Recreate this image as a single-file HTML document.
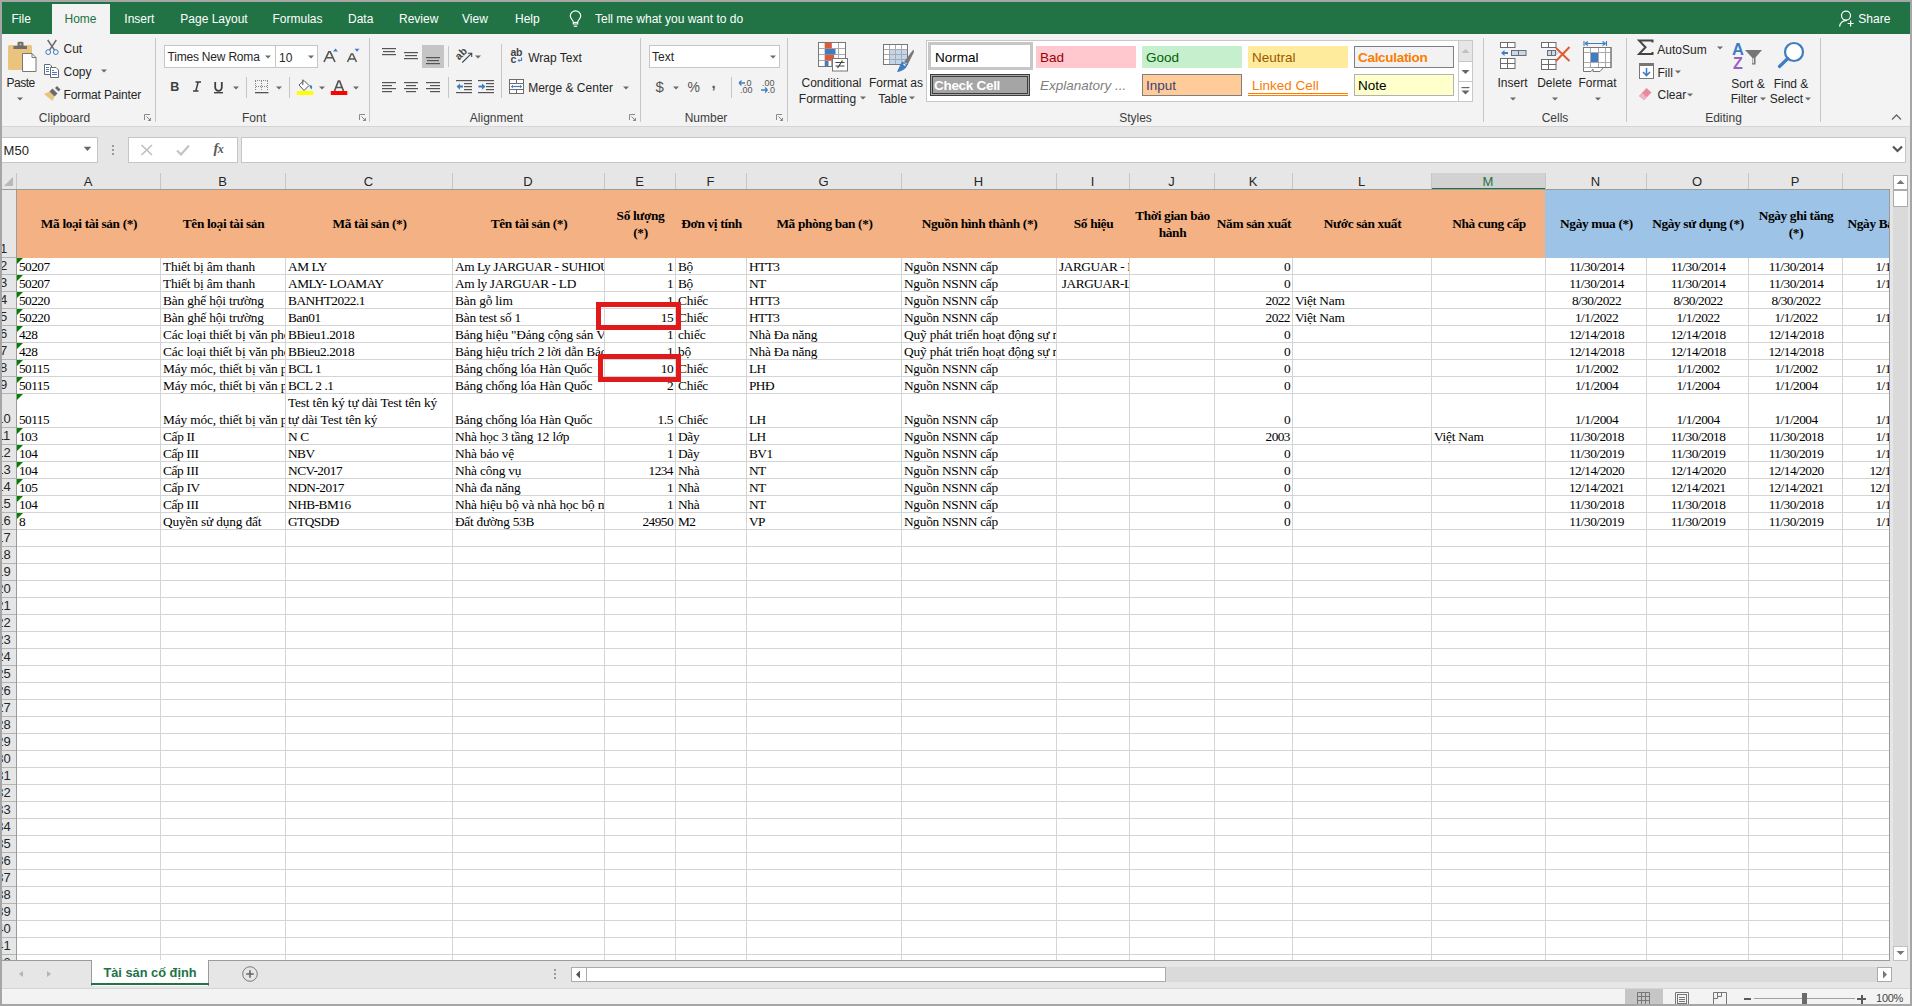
<!DOCTYPE html><html><head><meta charset="utf-8"><style>html,body{margin:0;padding:0;}body{width:1912px;height:1006px;position:relative;overflow:hidden;background:#a6a6a6;font-family:"Liberation Sans",sans-serif;}body div, body svg{position:absolute;box-sizing:border-box;}.c{overflow:hidden;}</style></head><body><div style="left:2px;top:2px;width:1908px;height:32px;background:#217346;"></div><div style="left:52px;top:4px;width:58px;height:30px;background:#f3f3f3;"></div><div style="top:12.84px;font:normal 12px/12px 'Liberation Sans', sans-serif;color:#ffffff;white-space:nowrap;left:11.5px;">File</div><div style="top:12.84px;font:normal 12px/12px 'Liberation Sans', sans-serif;color:#ffffff;white-space:nowrap;left:124.3px;">Insert</div><div style="top:12.84px;font:normal 12px/12px 'Liberation Sans', sans-serif;color:#ffffff;white-space:nowrap;left:180.3px;">Page Layout</div><div style="top:12.84px;font:normal 12px/12px 'Liberation Sans', sans-serif;color:#ffffff;white-space:nowrap;left:272.5px;">Formulas</div><div style="top:12.84px;font:normal 12px/12px 'Liberation Sans', sans-serif;color:#ffffff;white-space:nowrap;left:348px;">Data</div><div style="top:12.84px;font:normal 12px/12px 'Liberation Sans', sans-serif;color:#ffffff;white-space:nowrap;left:399px;">Review</div><div style="top:12.84px;font:normal 12px/12px 'Liberation Sans', sans-serif;color:#ffffff;white-space:nowrap;left:462px;">View</div><div style="top:12.84px;font:normal 12px/12px 'Liberation Sans', sans-serif;color:#ffffff;white-space:nowrap;left:515px;">Help</div><div style="top:12.84px;font:normal 12px/12px 'Liberation Sans', sans-serif;color:#ffffff;white-space:nowrap;left:595px;">Tell me what you want to do</div><div style="top:12.84px;font:normal 12px/12px 'Liberation Sans', sans-serif;color:#217346;white-space:nowrap;left:64.5px;">Home</div><div style="top:12.84px;font:normal 12px/12px 'Liberation Sans', sans-serif;color:#ffffff;white-space:nowrap;left:1858.3px;">Share</div><div style="left:2px;top:34px;width:1908px;height:92px;background:#f3f3f3;"></div><div style="left:2px;top:126px;width:1908px;height:1px;background:#d5d5d5;"></div><div style="left:155px;top:38px;width:1px;height:84px;background:#c6c6c6;"></div><div style="left:369px;top:38px;width:1px;height:84px;background:#c6c6c6;"></div><div style="left:640px;top:38px;width:1px;height:84px;background:#c6c6c6;"></div><div style="left:787px;top:38px;width:1px;height:84px;background:#c6c6c6;"></div><div style="left:1483px;top:38px;width:1px;height:84px;background:#c6c6c6;"></div><div style="left:1626px;top:38px;width:1px;height:84px;background:#c6c6c6;"></div><div style="left:1820px;top:38px;width:1px;height:84px;background:#c6c6c6;"></div><div style="top:112.14px;font:normal 12px/12px 'Liberation Sans', sans-serif;color:#3c3c3c;white-space:nowrap;left:-435.5px;width:1000px;text-align:center;">Clipboard</div><div style="top:112.14px;font:normal 12px/12px 'Liberation Sans', sans-serif;color:#3c3c3c;white-space:nowrap;left:-246px;width:1000px;text-align:center;">Font</div><div style="top:112.14px;font:normal 12px/12px 'Liberation Sans', sans-serif;color:#3c3c3c;white-space:nowrap;left:-3.5px;width:1000px;text-align:center;">Alignment</div><div style="top:112.14px;font:normal 12px/12px 'Liberation Sans', sans-serif;color:#3c3c3c;white-space:nowrap;left:206px;width:1000px;text-align:center;">Number</div><div style="top:112.14px;font:normal 12px/12px 'Liberation Sans', sans-serif;color:#3c3c3c;white-space:nowrap;left:635.5px;width:1000px;text-align:center;">Styles</div><div style="top:112.14px;font:normal 12px/12px 'Liberation Sans', sans-serif;color:#3c3c3c;white-space:nowrap;left:1055px;width:1000px;text-align:center;">Cells</div><div style="top:112.14px;font:normal 12px/12px 'Liberation Sans', sans-serif;color:#3c3c3c;white-space:nowrap;left:1223.5px;width:1000px;text-align:center;">Editing</div><svg style="left:568px;top:9px;" width="16" height="19" viewBox="0 0 16 19"><g fill="none" stroke="#fff" stroke-width="1.2"><path d="M5.3 15 L5.3 13 C5 11 2.3 9.5 2.3 7 A5.2 5.2 0 1 1 12.7 7 C12.7 9.5 10 11 9.7 13 L9.7 15 Z"/><path d="M5.3 13.5 H9.7"/><path d="M5.8 17.2 H9.2"/></g></svg><svg style="left:1837px;top:9px;" width="18" height="18" viewBox="0 0 18 18"><g fill="none" stroke="#fff" stroke-width="1.2"><circle cx="9" cy="6.6" r="4.5"/><path d="M2.6 17.6 C3 13.5 6 11.5 10 11.3"/><path d="M13.6 11.5 V17.5 M10.6 14.5 H16.6"/></g></svg><svg style="left:6px;top:40px;" width="32" height="34" viewBox="0 0 32 34"><rect x="2" y="5" width="24" height="25" rx="1.5" fill="#eac47e"/><path d="M7.5 9 V6 H11.5 V3 A1.5 1.5 0 0 1 13 1.8 H16 A1.5 1.5 0 0 1 17.5 3 V6 H21 V9 Z" fill="#6d6d6d"/><rect x="13.6" y="3.6" width="1.8" height="1.6" fill="#eac47e"/><path d="M16.5 13.5 H26 L30 17.5 V31.5 H16.5 Z" fill="#fff" stroke="#777" stroke-width="1"/><path d="M26 13.5 V17.5 H30" fill="none" stroke="#777" stroke-width="1"/></svg><div style="top:77.34px;font:normal 12px/12px 'Liberation Sans', sans-serif;color:#262626;white-space:nowrap;letter-spacing:-0.500px;left:6.5px;">Paste</div><svg style="left:15.5px;top:95.5px;" width="8" height="6" viewBox="0 0 8 6"><path d="M1.0 1.5 L7.0 1.5 L4 4.5 Z" fill="#6a6a6a"/></svg><svg style="left:44px;top:39px;" width="17" height="17" viewBox="0 0 17 17"><g stroke="#6d6d6d" stroke-width="1.5" fill="none"><path d="M3.7 1 L10.5 11.2"/><path d="M12.3 1 L5.5 11.2"/></g><g stroke="#3d7cc9" stroke-width="1" fill="none"><circle cx="4.2" cy="13.1" r="2.4"/><circle cx="11.8" cy="13.1" r="2.4"/></g></svg><div style="top:43.44px;font:normal 12px/12px 'Liberation Sans', sans-serif;color:#262626;white-space:nowrap;left:63.5px;">Cut</div><svg style="left:43px;top:63px;" width="18" height="16" viewBox="0 0 18 16"><g fill="#fff" stroke="#6a6a6a" stroke-width="1"><path d="M1.5 1.5 H7 L8.5 3 V11.5 H1.5 Z"/><path d="M7.5 4.5 H13 L15.5 7 V14.5 H7.5 Z"/></g><g fill="#3d7cc9"><rect x="3" y="4" width="3" height="1"/><rect x="3" y="6" width="3" height="1"/><rect x="3" y="8" width="3" height="1"/><rect x="9" y="7" width="2" height="1"/><rect x="9" y="9" width="5" height="1"/><rect x="9" y="11" width="5" height="1"/></g></svg><div style="top:66.34px;font:normal 12px/12px 'Liberation Sans', sans-serif;color:#262626;white-space:nowrap;left:63.5px;">Copy</div><svg style="left:99.5px;top:68px;" width="8" height="6" viewBox="0 0 8 6"><path d="M1.0 1.5 L7.0 1.5 L4 4.5 Z" fill="#6a6a6a"/></svg><svg style="left:43px;top:86px;" width="19" height="16" viewBox="0 0 19 16"><path d="M1 8 L6.5 5.5 L11.5 10.5 L9.5 15 Z" fill="#eac47e"/><path d="M6.5 5.5 L9.5 2.5 L14.5 7.5 L11.5 10.5 Z" fill="#6a6a6a"/><path d="M12 2 L14 0 L17.5 3.5 L15.5 5.5 Z" fill="#6a6a6a"/></svg><div style="top:89.24px;font:normal 12px/12px 'Liberation Sans', sans-serif;color:#262626;white-space:nowrap;letter-spacing:-0.120px;left:63.5px;">Format Painter</div><svg style="left:144px;top:114px;" width="8" height="8" viewBox="0 0 8 8"><path d="M0.5 6 V0.5 H6" stroke="#8a8a8a" fill="none"/><path d="M2.5 2.5 L6.5 6.5" stroke="#8a8a8a" fill="none"/><path d="M3.5 7 H7 V3.5 Z" fill="#8a8a8a"/></svg><div style="left:164px;top:45px;width:112px;height:23px;background:#fff;border:1px solid #c6c6c6;"></div><div style="left:275px;top:45px;width:43px;height:23px;background:#fff;border:1px solid #c6c6c6;"></div><div style="top:51.34px;font:normal 12px/12px 'Liberation Sans', sans-serif;color:#262626;white-space:nowrap;letter-spacing:-0.200px;left:167.5px;">Times New Roma</div><svg style="left:263.5px;top:54px;" width="8" height="6" viewBox="0 0 8 6"><path d="M1.0 1.5 L7.0 1.5 L4 4.5 Z" fill="#6a6a6a"/></svg><div style="top:51.84px;font:normal 12px/12px 'Liberation Sans', sans-serif;color:#262626;white-space:nowrap;left:279px;">10</div><svg style="left:306.5px;top:54px;" width="8" height="6" viewBox="0 0 8 6"><path d="M1.0 1.5 L7.0 1.5 L4 4.5 Z" fill="#6a6a6a"/></svg><svg style="left:322px;top:46px;" width="17" height="17" viewBox="0 0 17 17"><path d="M2 16 L6.8 5.8 H8.2 L13 16 M4 11.8 H11" fill="none" stroke="#555" stroke-width="1.6"/><path d="M11 5.5 L13.5 2.5 L16 5.5 Z" fill="#3f7dc3"/></svg><svg style="left:345px;top:46px;" width="16" height="17" viewBox="0 0 16 17"><path d="M2.5 16 L6.3 8 H7.7 L11.5 16 M4.2 13 H10" fill="none" stroke="#555" stroke-width="1.5"/><path d="M9.5 2.8 H14.5 L12 5.8 Z" fill="#3f7dc3"/></svg><div style="top:81.42px;font:bold 12.5px/12.5px 'Liberation Sans', sans-serif;color:#404040;white-space:nowrap;left:170.3px;">B</div><svg style="left:192px;top:81px;" width="10" height="11" viewBox="0 0 10 11"><path d="M3.5 1 H9 M1 10 H6.5 M6.2 1 L3.8 10" stroke="#404040" stroke-width="1.5" fill="none"/></svg><svg style="left:213px;top:81px;" width="11" height="13" viewBox="0 0 11 13"><path d="M2.2 1 V6.5 A3.3 3.3 0 0 0 8.8 6.5 V1" stroke="#404040" stroke-width="1.8" fill="none"/><rect x="1" y="11" width="9" height="1.4" fill="#404040"/></svg><svg style="left:231.5px;top:84.5px;" width="8" height="6" viewBox="0 0 8 6"><path d="M1.0 1.5 L7.0 1.5 L4 4.5 Z" fill="#6a6a6a"/></svg><div style="left:246px;top:77px;width:1px;height:21px;background:#c6c6c6;"></div><svg style="left:254px;top:79px;" width="16" height="15" viewBox="0 0 16 15"><g fill="#888"><path d="M1 1 h1 v1 h-1z M3 1h1v1h-1z M5 1h1v1h-1z M7 1h1v1h-1z M9 1h1v1h-1z M11 1h1v1h-1z M13 1h1v1h-1z"/></g><g stroke="#888" stroke-dasharray="1 1" fill="none"><path d="M1.5 2 V12 M7.5 2 V12 M13.5 2 V12 M2 7.5 H13"/></g><rect x="1" y="13" width="13.5" height="1.3" fill="#555"/></svg><svg style="left:274.5px;top:84.5px;" width="8" height="6" viewBox="0 0 8 6"><path d="M1.0 1.5 L7.0 1.5 L4 4.5 Z" fill="#6a6a6a"/></svg><div style="left:289px;top:77px;width:1px;height:21px;background:#c6c6c6;"></div><svg style="left:296px;top:78px;" width="19" height="18" viewBox="0 0 19 18"><path d="M3 7 L8 2.5 L13 7.5 L8 12.5 Z" fill="#fff" stroke="#555" stroke-width="1"/><path d="M6.8 1.5 V7" stroke="#555" stroke-width="1"/><path d="M13.5 7.5 C16 6.5 17 8.5 15.5 11.5 L14 9.5 Z" fill="#3f7dc3"/><rect x="0.8" y="13" width="16.5" height="4" fill="#ffff00"/></svg><svg style="left:317.5px;top:84.5px;" width="8" height="6" viewBox="0 0 8 6"><path d="M1.0 1.5 L7.0 1.5 L4 4.5 Z" fill="#6a6a6a"/></svg><svg style="left:330px;top:79px;" width="18" height="17" viewBox="0 0 18 17"><path d="M4.5 12 L8.4 2 H9.6 L13.5 12 M6 8.5 H12" fill="none" stroke="#555" stroke-width="1.7"/><rect x="0.8" y="12" width="16.5" height="4" fill="#ff0000"/></svg><svg style="left:351.5px;top:84.5px;" width="8" height="6" viewBox="0 0 8 6"><path d="M1.0 1.5 L7.0 1.5 L4 4.5 Z" fill="#6a6a6a"/></svg><svg style="left:359px;top:114px;" width="8" height="8" viewBox="0 0 8 8"><path d="M0.5 6 V0.5 H6" stroke="#8a8a8a" fill="none"/><path d="M2.5 2.5 L6.5 6.5" stroke="#8a8a8a" fill="none"/><path d="M3.5 7 H7 V3.5 Z" fill="#8a8a8a"/></svg><svg style="left:382px;top:47px;" width="14" height="9" viewBox="0 0 14 9"><rect x="0" y="1" width="14" height="1.2" fill="#555"/><rect x="1" y="4" width="12" height="1.2" fill="#555"/><rect x="0" y="7" width="14" height="1.2" fill="#555"/></svg><svg style="left:404px;top:51px;" width="14" height="9" viewBox="0 0 14 9"><rect x="0" y="1" width="14" height="1.2" fill="#555"/><rect x="1" y="4" width="12" height="1.2" fill="#555"/><rect x="0" y="7" width="14" height="1.2" fill="#555"/></svg><div style="left:422px;top:45px;width:22px;height:23px;background:#c5c5c5;"></div><svg style="left:426px;top:56px;" width="14" height="9" viewBox="0 0 14 9"><rect x="0" y="1" width="14" height="1.2" fill="#555"/><rect x="1" y="4" width="12" height="1.2" fill="#555"/><rect x="0" y="7" width="14" height="1.2" fill="#555"/></svg><div style="left:448px;top:46px;width:1px;height:21px;background:#c6c6c6;"></div><svg style="left:450px;top:42px;" width="26" height="24" viewBox="0 0 26 24"><text x="0" y="0" transform="translate(9 18.5) rotate(-45)" font-family="Liberation Sans" font-size="10.5" font-weight="bold" fill="#454545">ab</text><path d="M12.3 20.5 L21.5 11.3 M17.8 11.2 H21.7 V15" stroke="#454545" stroke-width="1.1" fill="none"/></svg><svg style="left:474px;top:54px;" width="8" height="6" viewBox="0 0 8 6"><path d="M1.0 1.5 L7.0 1.5 L4 4.5 Z" fill="#6a6a6a"/></svg><svg style="left:382px;top:81px;" width="14" height="13" viewBox="0 0 14 13"><rect x="0" y="1" width="14" height="1.2" fill="#555"/><rect x="0" y="4" width="10" height="1.2" fill="#555"/><rect x="0" y="7" width="14" height="1.2" fill="#555"/><rect x="0" y="10" width="10" height="1.2" fill="#555"/></svg><svg style="left:404px;top:81px;" width="14" height="13" viewBox="0 0 14 13"><rect x="0" y="1" width="14" height="1.2" fill="#555"/><rect x="2" y="4" width="10" height="1.2" fill="#555"/><rect x="0" y="7" width="14" height="1.2" fill="#555"/><rect x="2" y="10" width="10" height="1.2" fill="#555"/></svg><svg style="left:426px;top:81px;" width="14" height="13" viewBox="0 0 14 13"><rect x="0" y="1" width="14" height="1.2" fill="#555"/><rect x="4" y="4" width="10" height="1.2" fill="#555"/><rect x="0" y="7" width="14" height="1.2" fill="#555"/><rect x="4" y="10" width="10" height="1.2" fill="#555"/></svg><div style="left:448px;top:77px;width:1px;height:21px;background:#c6c6c6;"></div><svg style="left:456px;top:79px;" width="17" height="15" viewBox="0 0 17 15"><rect x="0" y="1" width="16" height="1.2" fill="#555"/><rect x="8" y="4" width="8" height="1.2" fill="#555"/><rect x="8" y="7" width="8" height="1.2" fill="#555"/><rect x="8" y="10" width="8" height="1.2" fill="#555"/><rect x="0" y="13" width="16" height="1.2" fill="#555"/><path d="M0.5 7.6 L4 4.5 V6.6 H7 V8.6 H4 V10.7 Z" fill="#3f7dc3"/></svg><svg style="left:478px;top:79px;" width="17" height="15" viewBox="0 0 17 15"><rect x="0" y="1" width="16" height="1.2" fill="#555"/><rect x="8" y="4" width="8" height="1.2" fill="#555"/><rect x="8" y="7" width="8" height="1.2" fill="#555"/><rect x="8" y="10" width="8" height="1.2" fill="#555"/><rect x="0" y="13" width="16" height="1.2" fill="#555"/><path d="M7.5 7.6 L4 4.5 V6.6 H0.5 V8.6 H4 V10.7 Z" fill="#3f7dc3"/></svg><div style="left:501px;top:44px;width:1px;height:54px;background:#c6c6c6;"></div><svg style="left:509px;top:46px;" width="16" height="18" viewBox="0 0 16 18"><text x="1.5" y="9.8" font-family="Liberation Sans" font-size="10.5" font-weight="bold" fill="#454545" letter-spacing="-0.3">ab</text><text x="1.5" y="16.8" font-family="Liberation Sans" font-size="10.5" font-weight="bold" fill="#454545">c</text><path d="M12.5 11.5 V14.5 H9.5" stroke="#3f7dc3" stroke-width="1.2" fill="none"/><path d="M8.5 14.5 L10.5 12.8 V16.2 Z" fill="#3f7dc3"/></svg><div style="top:51.74px;font:normal 12px/12px 'Liberation Sans', sans-serif;color:#262626;white-space:nowrap;left:528.2px;">Wrap Text</div><svg style="left:508px;top:78px;" width="17" height="17" viewBox="0 0 17 17"><rect x="1.5" y="1.5" width="14" height="14" fill="#fff" stroke="#6d6d6d"/><path d="M1.5 5.5 H15.5 M1.5 11.5 H15.5 M8.5 1.5 V5.5 M8.5 11.5 V15.5" stroke="#6d6d6d" fill="none"/><path d="M3.5 8.5 H13.5" stroke="#3f7dc3" stroke-width="1.2"/><path d="M3 8.5 L5 6.8 V10.2 Z M14 8.5 L12 6.8 V10.2 Z" fill="#3f7dc3"/></svg><div style="top:82.44px;font:normal 12px/12px 'Liberation Sans', sans-serif;color:#262626;white-space:nowrap;left:528.2px;">Merge &amp; Center</div><svg style="left:621.5px;top:85px;" width="8" height="6" viewBox="0 0 8 6"><path d="M1.0 1.5 L7.0 1.5 L4 4.5 Z" fill="#6a6a6a"/></svg><svg style="left:629px;top:114px;" width="8" height="8" viewBox="0 0 8 8"><path d="M0.5 6 V0.5 H6" stroke="#8a8a8a" fill="none"/><path d="M2.5 2.5 L6.5 6.5" stroke="#8a8a8a" fill="none"/><path d="M3.5 7 H7 V3.5 Z" fill="#8a8a8a"/></svg><div style="left:649px;top:45px;width:131px;height:23px;background:#fff;border:1px solid #c6c6c6;"></div><div style="top:50.64px;font:normal 12px/12px 'Liberation Sans', sans-serif;color:#262626;white-space:nowrap;left:652px;">Text</div><svg style="left:768.5px;top:53.5px;" width="8" height="6" viewBox="0 0 8 6"><path d="M1.0 1.5 L7.0 1.5 L4 4.5 Z" fill="#6a6a6a"/></svg><div style="top:79.30px;font:normal 15px/15px 'Liberation Sans', sans-serif;color:#555;white-space:nowrap;left:655.5px;">$</div><svg style="left:672px;top:84.5px;" width="8" height="6" viewBox="0 0 8 6"><path d="M1.0 1.5 L7.0 1.5 L4 4.5 Z" fill="#6a6a6a"/></svg><div style="top:80.15px;font:normal 14px/14px 'Liberation Sans', sans-serif;color:#555;white-space:nowrap;left:687.5px;">%</div><div style="top:75.30px;font:bold 15px/15px 'Liberation Sans', sans-serif;color:#555;white-space:nowrap;left:711.5px;">,</div><div style="left:731px;top:77px;width:1px;height:21px;background:#c6c6c6;"></div><svg style="left:738px;top:79px;" width="17" height="15" viewBox="0 0 17 15"><text x="6" y="7" font-family="Liberation Sans" font-size="9" fill="#555">.0</text><text x="2" y="14" font-family="Liberation Sans" font-size="9" fill="#555">.00</text><path d="M1 4 H7 M1 4 L3.5 1.5 M1 4 L3.5 6.5" stroke="#3f7dc3" stroke-width="1.3" fill="none"/></svg><svg style="left:760px;top:79px;" width="17" height="15" viewBox="0 0 17 15"><text x="2" y="7" font-family="Liberation Sans" font-size="9" fill="#555">.00</text><text x="7.5" y="14" font-family="Liberation Sans" font-size="9" fill="#555">.0</text><path d="M1 11 H7.5 M7.5 11 L5 8.5 M7.5 11 L5 13.5" stroke="#3f7dc3" stroke-width="1.3" fill="none"/></svg><svg style="left:776px;top:114px;" width="8" height="8" viewBox="0 0 8 8"><path d="M0.5 6 V0.5 H6" stroke="#8a8a8a" fill="none"/><path d="M2.5 2.5 L6.5 6.5" stroke="#8a8a8a" fill="none"/><path d="M3.5 7 H7 V3.5 Z" fill="#8a8a8a"/></svg><svg style="left:817px;top:41px;" width="33" height="32" viewBox="0 0 33 32"><rect x="1.5" y="1.5" width="27" height="24" fill="#fff"/><g stroke="#aaa" stroke-width="1" fill="none"><path d="M1.5 7.5 H28.5 M1.5 13.5 H28.5 M1.5 19.5 H28.5 M8 1.5 V25.5 M14.5 1.5 V25.5 M21.5 1.5 V25.5"/></g><rect x="8" y="2" width="6.5" height="5.5" fill="#e05a35"/><rect x="8" y="8" width="10.5" height="5.5" fill="#3f7dc3"/><rect x="8" y="14" width="9" height="5.5" fill="#e05a35"/><rect x="8" y="20" width="3.5" height="5.5" fill="#3f7dc3"/><rect x="1.5" y="1.5" width="27" height="24" fill="none" stroke="#777"/><rect x="15.5" y="17.5" width="15" height="12.5" fill="#fff" stroke="#777"/><path d="M18.5 21.5 H27.5 M18.5 25 H27.5 M25.5 19.5 L20.5 27" stroke="#444" stroke-width="1.2" fill="none"/></svg><div style="top:77.34px;font:normal 12px/12px 'Liberation Sans', sans-serif;color:#262626;white-space:nowrap;left:331.5px;width:1000px;text-align:center;">Conditional</div><div style="top:93.04px;font:normal 12px/12px 'Liberation Sans', sans-serif;color:#262626;white-space:nowrap;left:327.5px;width:1000px;text-align:center;">Formatting</div><svg style="left:858.5px;top:95px;" width="8" height="6" viewBox="0 0 8 6"><path d="M1.0 1.5 L7.0 1.5 L4 4.5 Z" fill="#6a6a6a"/></svg><svg style="left:882px;top:43px;" width="32" height="30" viewBox="0 0 32 30"><rect x="1.5" y="1.5" width="24" height="20" fill="#fff" stroke="#777"/><rect x="8" y="7" width="17.5" height="14.5" fill="#c0d6ee"/><g stroke="#aaa" fill="none"><path d="M1.5 6.5 H25.5 M1.5 11.5 H25.5 M1.5 16.5 H25.5 M7.5 1.5 V21.5 M13.5 1.5 V21.5 M19.5 1.5 V21.5"/></g><rect x="1.5" y="1.5" width="24" height="20" fill="none" stroke="#777"/><path d="M22 19 L29 9.5 L31.5 6.5 L32 9 L26 21 Z" fill="#777"/><path d="M20.5 18.5 L25.5 22 C24 26 20 28.5 15 29 C17 25 18 21 20.5 18.5 Z" fill="#3f7dc3"/><path d="M21.5 21 L23.5 22.5" stroke="#fff" stroke-width="1.2"/></svg><div style="top:77.34px;font:normal 12px/12px 'Liberation Sans', sans-serif;color:#262626;white-space:nowrap;left:396px;width:1000px;text-align:center;">Format as</div><div style="top:93.04px;font:normal 12px/12px 'Liberation Sans', sans-serif;color:#262626;white-space:nowrap;left:392.5px;width:1000px;text-align:center;">Table</div><svg style="left:907.5px;top:95px;" width="8" height="6" viewBox="0 0 8 6"><path d="M1.0 1.5 L7.0 1.5 L4 4.5 Z" fill="#6a6a6a"/></svg><div style="left:926px;top:40px;width:547px;height:62px;background:#fff;border:1px solid #c8c8c8;"></div><div style="left:928px;top:42px;width:105px;height:28px;background:#fff;border:3px solid #c6c6c6;"></div><div style="top:50.57px;font:normal 13.5px/13.5px 'Liberation Sans', sans-serif;color:#000;white-space:nowrap;left:935px;">Normal</div><div style="left:1036px;top:46px;width:100px;height:22px;background:#ffc7ce;"></div><div style="top:50.57px;font:normal 13.5px/13.5px 'Liberation Sans', sans-serif;color:#9c0006;white-space:nowrap;left:1040px;">Bad</div><div style="left:1142px;top:46px;width:100px;height:22px;background:#c6efce;"></div><div style="top:50.57px;font:normal 13.5px/13.5px 'Liberation Sans', sans-serif;color:#006100;white-space:nowrap;left:1146px;">Good</div><div style="left:1248px;top:46px;width:100px;height:22px;background:#ffeb9c;"></div><div style="top:50.57px;font:normal 13.5px/13.5px 'Liberation Sans', sans-serif;color:#9c5700;white-space:nowrap;left:1252px;">Neutral</div><div style="left:1354px;top:46px;width:100px;height:22px;background:#f2f2f2;border:1px solid #7f7f7f;"></div><div style="top:50.57px;font:bold 13.5px/13.5px 'Liberation Sans', sans-serif;color:#fa7d00;white-space:nowrap;letter-spacing:-0.300px;left:1358px;">Calculation</div><div style="left:930px;top:74px;width:100px;height:22px;background:#a5a5a5;border:3px double #3f3f3f;"></div><div style="top:78.57px;font:bold 13.5px/13.5px 'Liberation Sans', sans-serif;color:#ffffff;white-space:nowrap;letter-spacing:-0.300px;left:934px;">Check Cell</div><div style="top:78.57px;font:normal 13.5px/13.5px 'Liberation Sans', sans-serif;color:#7f7f7f;white-space:nowrap;left:1040px;font-style:italic;">Explanatory ...</div><div style="left:1142px;top:74px;width:100px;height:22px;background:#ffcc99;border:1px solid #7f7f7f;"></div><div style="top:78.57px;font:normal 13.5px/13.5px 'Liberation Sans', sans-serif;color:#3f3f76;white-space:nowrap;left:1146px;">Input</div><div style="left:1248px;top:93px;width:100px;height:1px;background:#ff8001;"></div><div style="left:1248px;top:95px;width:100px;height:1px;background:#ff8001;"></div><div style="top:78.57px;font:normal 13.5px/13.5px 'Liberation Sans', sans-serif;color:#fa7d00;white-space:nowrap;left:1252px;">Linked Cell</div><div style="left:1354px;top:74px;width:100px;height:22px;background:#ffffcc;border:1px solid #b2b2b2;"></div><div style="top:78.57px;font:normal 13.5px/13.5px 'Liberation Sans', sans-serif;color:#000;white-space:nowrap;left:1358px;">Note</div><div style="left:1458px;top:41px;width:14px;height:20px;background:#e6e6e6;border-left:1px solid #c8c8c8;"></div><svg style="left:1461px;top:48px;" width="9" height="6" viewBox="0 0 9 6"><path d="M0.5 5 L4.5 1 L8.5 5 Z" fill="#c0c0c0"/></svg><div style="left:1458px;top:61px;width:14px;height:20px;background:#fff;border-left:1px solid #c8c8c8;border-top:1px solid #c8c8c8;"></div><svg style="left:1461px;top:69px;" width="9" height="6" viewBox="0 0 9 6"><path d="M0.5 1 L4.5 5 L8.5 1 Z" fill="#666"/></svg><div style="left:1458px;top:81px;width:14px;height:20px;background:#fff;border-left:1px solid #c8c8c8;border-top:1px solid #c8c8c8;"></div><svg style="left:1461px;top:87px;" width="9" height="9" viewBox="0 0 9 9"><rect x="0.5" y="0" width="8" height="1.2" fill="#666"/><path d="M0.5 3.5 L4.5 7.5 L8.5 3.5 Z" fill="#666"/></svg><svg style="left:1499px;top:41px;" width="28" height="29" viewBox="0 0 28 29"><g fill="#fff" stroke="#6d6d6d" stroke-width="1"><rect x="1.5" y="1.5" width="14.5" height="5"/><rect x="1.5" y="17.5" width="14.5" height="10"/><rect x="12.5" y="9.5" width="14.5" height="5" fill="#c5d9f1"/></g><path d="M8.5 1.5 V6.5 M1.5 22.5 H16 M8.5 17.5 V27.5 M19.5 9.5 V14.5" stroke="#6d6d6d" fill="none"/><path d="M2 12 L5.5 9 V11 H9 V13 H5.5 V15 Z" fill="#3f7dc3"/></svg><div style="top:77.34px;font:normal 12px/12px 'Liberation Sans', sans-serif;color:#262626;white-space:nowrap;left:1012.5px;width:1000px;text-align:center;">Insert</div><svg style="left:1508.5px;top:95.5px;" width="8" height="6" viewBox="0 0 8 6"><path d="M1.0 1.5 L7.0 1.5 L4 4.5 Z" fill="#6a6a6a"/></svg><svg style="left:1540px;top:41px;" width="32" height="29" viewBox="0 0 32 29"><g fill="#fff" stroke="#6d6d6d" stroke-width="1"><rect x="1.5" y="1.5" width="14.5" height="5"/><rect x="1.5" y="18.5" width="14.5" height="10"/><rect x="7.5" y="9.5" width="8" height="5" fill="#c5d9f1"/></g><path d="M8.5 1.5 V6.5 M1.5 23.5 H16 M8.5 18.5 V28.5 M11.5 9.5 V14.5" stroke="#6d6d6d" fill="none"/><path d="M16 9.5 L19 12 L16 14.5 Z" fill="#c5d9f1"/><path d="M16 7 L29.5 20 M29.5 6 L16 20" stroke="#e05a35" stroke-width="2"/></svg><div style="top:77.34px;font:normal 12px/12px 'Liberation Sans', sans-serif;color:#262626;white-space:nowrap;left:1054.5px;width:1000px;text-align:center;">Delete</div><svg style="left:1550.5px;top:95.5px;" width="8" height="6" viewBox="0 0 8 6"><path d="M1.0 1.5 L7.0 1.5 L4 4.5 Z" fill="#6a6a6a"/></svg><svg style="left:1582px;top:40px;" width="31" height="33" viewBox="0 0 31 33"><path d="M2 1 V6 M24.5 1 V6 M3 3.5 H23.5" stroke="#3f7dc3" stroke-width="1.1" fill="none"/><path d="M3 3.5 L6 1.5 M3 3.5 L6 5.5 M23.5 3.5 L20.5 1.5 M23.5 3.5 L20.5 5.5" stroke="#3f7dc3" stroke-width="1.3" fill="none"/><rect x="1.5" y="7.5" width="27.5" height="20" fill="#fff" stroke="#777"/><rect x="9" y="13" width="7" height="9" fill="#3f7dc3"/><path d="M1.5 12.5 H29 M1.5 22.5 H29 M8.5 7.5 V27.5 M16.5 7.5 V27.5 M23.5 7.5 V27.5" stroke="#aaa" fill="none"/><rect x="1.5" y="7.5" width="27.5" height="20" fill="none" stroke="#777"/><path d="M1.5 27.5 V31.5 H9 L11 29 V31.5 H18 L21 28" stroke="#777" fill="#fff"/></svg><div style="top:77.34px;font:normal 12px/12px 'Liberation Sans', sans-serif;color:#262626;white-space:nowrap;left:1097.5px;width:1000px;text-align:center;">Format</div><svg style="left:1593.5px;top:95.5px;" width="8" height="6" viewBox="0 0 8 6"><path d="M1.0 1.5 L7.0 1.5 L4 4.5 Z" fill="#6a6a6a"/></svg><svg style="left:1637px;top:39px;" width="18" height="17" viewBox="0 0 18 17"><path d="M15.5 3.5 V1.5 H2 L8.5 8.3 L2 15 H15.5 V13" fill="none" stroke="#444" stroke-width="2"/></svg><div style="top:43.74px;font:normal 12px/12px 'Liberation Sans', sans-serif;color:#262626;white-space:nowrap;left:1657.3px;">AutoSum</div><svg style="left:1715.5px;top:45px;" width="8" height="6" viewBox="0 0 8 6"><path d="M1.0 1.5 L7.0 1.5 L4 4.5 Z" fill="#6a6a6a"/></svg><svg style="left:1638px;top:62px;" width="17" height="18" viewBox="0 0 17 18"><rect x="1.5" y="1.5" width="14" height="15" fill="#fff" stroke="#777"/><rect x="1" y="1" width="15" height="3" fill="#777"/><path d="M8.5 6 V13 M5 10 L8.5 13.5 L12 10" stroke="#3f7dc3" stroke-width="1.6" fill="none"/></svg><div style="top:66.64px;font:normal 12px/12px 'Liberation Sans', sans-serif;color:#262626;white-space:nowrap;left:1657.5px;">Fill</div><svg style="left:1673.5px;top:69px;" width="8" height="6" viewBox="0 0 8 6"><path d="M1.0 1.5 L7.0 1.5 L4 4.5 Z" fill="#6a6a6a"/></svg><svg style="left:1638px;top:86px;" width="15" height="15" viewBox="0 0 15 15"><path d="M1 10 L8.5 2 L13.5 6.5 L6 14 Z" fill="#e8899c"/><path d="M1 10 L4 7 L9 11.5 L6 14 Z" fill="#f2b3c0"/></svg><div style="top:89.44px;font:normal 12px/12px 'Liberation Sans', sans-serif;color:#262626;white-space:nowrap;left:1657.5px;">Clear</div><svg style="left:1685.5px;top:91.5px;" width="8" height="6" viewBox="0 0 8 6"><path d="M1.0 1.5 L7.0 1.5 L4 4.5 Z" fill="#6a6a6a"/></svg><svg style="left:1732px;top:41px;" width="32" height="30" viewBox="0 0 32 30"><text x="0" y="14" font-family="Liberation Sans" font-size="16.5" font-weight="bold" fill="#3f7dc3" transform="scale(1 1)">A</text><text x="1" y="27.5" font-family="Liberation Sans" font-size="16" font-weight="bold" fill="#9b5fc6">Z</text><path d="M13 9 H30 L23.5 16.5 V23.5 H20 V16.5 Z" fill="#777"/><path d="M21.2 17 V22.3" stroke="#f3f3f3" stroke-width="1.3"/></svg><div style="top:77.54px;font:normal 12px/12px 'Liberation Sans', sans-serif;color:#262626;white-space:nowrap;left:1248px;width:1000px;text-align:center;">Sort &amp;</div><div style="top:93.44px;font:normal 12px/12px 'Liberation Sans', sans-serif;color:#262626;white-space:nowrap;letter-spacing:0.000px;left:1244px;width:1000px;text-align:center;">Filter</div><svg style="left:1759px;top:95.5px;" width="8" height="6" viewBox="0 0 8 6"><path d="M1.0 1.5 L7.0 1.5 L4 4.5 Z" fill="#6a6a6a"/></svg><svg style="left:1776px;top:41px;" width="30" height="30" viewBox="0 0 30 30"><circle cx="18" cy="11" r="9" fill="#fff" stroke="#3f7dc3" stroke-width="2.2"/><path d="M11.8 17.5 L3.5 25.5" stroke="#3f7dc3" stroke-width="3.2" stroke-linecap="round"/></svg><div style="top:77.54px;font:normal 12px/12px 'Liberation Sans', sans-serif;color:#262626;white-space:nowrap;left:1291px;width:1000px;text-align:center;">Find &amp;</div><div style="top:93.44px;font:normal 12px/12px 'Liberation Sans', sans-serif;color:#262626;white-space:nowrap;left:1286.5px;width:1000px;text-align:center;">Select</div><svg style="left:1803.5px;top:95.5px;" width="8" height="6" viewBox="0 0 8 6"><path d="M1.0 1.5 L7.0 1.5 L4 4.5 Z" fill="#6a6a6a"/></svg><svg style="left:1891px;top:113px;" width="11" height="8" viewBox="0 0 11 8"><path d="M1 6.5 L5.5 2 L10 6.5" stroke="#666" stroke-width="1.3" fill="none"/></svg><div style="left:2px;top:127px;width:1908px;height:46px;background:#e6e6e6;"></div><div style="left:2px;top:137px;width:96px;height:26px;background:#fff;border:1px solid #c6c6c6;border-left:none;"></div><div style="top:143.90px;font:normal 13px/13px 'Liberation Sans', sans-serif;color:#262626;white-space:nowrap;left:3.6px;">M50</div><div style="left:128px;top:137px;width:110px;height:26px;background:#fff;border:1px solid #c6c6c6;"></div><div style="left:241px;top:137px;width:1665px;height:26px;background:#fff;border:1px solid #c6c6c6;"></div><svg style="left:83px;top:146px;" width="9" height="6" viewBox="0 0 9 6"><path d="M0.8 0.8 H8.2 L4.5 5 Z" fill="#666"/></svg><div style="left:112px;top:145px;width:2px;height:2px;background:#9a9a9a;"></div><div style="left:112px;top:149px;width:2px;height:2px;background:#9a9a9a;"></div><div style="left:112px;top:153px;width:2px;height:2px;background:#9a9a9a;"></div><svg style="left:140px;top:144px;" width="14" height="12" viewBox="0 0 14 12"><path d="M1.5 1 L12 11 M12 1 L1.5 11" stroke="#bdbdbd" stroke-width="1.5"/></svg><svg style="left:176px;top:144px;" width="14" height="12" viewBox="0 0 14 12"><path d="M1 6.5 L5 10.5 L13 1.5" stroke="#c4c4c4" stroke-width="2.2" fill="none"/></svg><div style="left:213.5px;top:140.8px;font:italic bold 14.5px/14.5px 'Liberation Serif',serif;color:#5a5a5a;letter-spacing:-0.5px;">f<span style='font-size:12px'>x</span></div><svg style="left:1892px;top:145px;" width="11" height="8" viewBox="0 0 11 8"><path d="M1 1.5 L5.5 6 L10 1.5" stroke="#555" stroke-width="2.2" fill="none"/></svg><div style="left:2px;top:173px;width:1888px;height:17px;background:#e6e6e6;"></div><svg style="left:3px;top:176px;" width="11" height="11" viewBox="0 0 11 11"><path d="M10 1 V10 H1 Z" fill="#b8b8b8"/></svg><div style="left:16px;top:173px;width:1px;height:16px;background:#c6c6c6;"></div><div style="top:175.20px;font:normal 13px/13px 'Liberation Sans', sans-serif;color:#262626;white-space:nowrap;left:-412.0px;width:1000px;text-align:center;">A</div><div style="left:160px;top:173px;width:1px;height:16px;background:#c6c6c6;"></div><div style="top:175.20px;font:normal 13px/13px 'Liberation Sans', sans-serif;color:#262626;white-space:nowrap;left:-277.5px;width:1000px;text-align:center;">B</div><div style="left:285px;top:173px;width:1px;height:16px;background:#c6c6c6;"></div><div style="top:175.20px;font:normal 13px/13px 'Liberation Sans', sans-serif;color:#262626;white-space:nowrap;left:-131.5px;width:1000px;text-align:center;">C</div><div style="left:452px;top:173px;width:1px;height:16px;background:#c6c6c6;"></div><div style="top:175.20px;font:normal 13px/13px 'Liberation Sans', sans-serif;color:#262626;white-space:nowrap;left:28.0px;width:1000px;text-align:center;">D</div><div style="left:604px;top:173px;width:1px;height:16px;background:#c6c6c6;"></div><div style="top:175.20px;font:normal 13px/13px 'Liberation Sans', sans-serif;color:#262626;white-space:nowrap;left:139.5px;width:1000px;text-align:center;">E</div><div style="left:675px;top:173px;width:1px;height:16px;background:#c6c6c6;"></div><div style="top:175.20px;font:normal 13px/13px 'Liberation Sans', sans-serif;color:#262626;white-space:nowrap;left:210.5px;width:1000px;text-align:center;">F</div><div style="left:746px;top:173px;width:1px;height:16px;background:#c6c6c6;"></div><div style="top:175.20px;font:normal 13px/13px 'Liberation Sans', sans-serif;color:#262626;white-space:nowrap;left:323.5px;width:1000px;text-align:center;">G</div><div style="left:901px;top:173px;width:1px;height:16px;background:#c6c6c6;"></div><div style="top:175.20px;font:normal 13px/13px 'Liberation Sans', sans-serif;color:#262626;white-space:nowrap;left:478.5px;width:1000px;text-align:center;">H</div><div style="left:1056px;top:173px;width:1px;height:16px;background:#c6c6c6;"></div><div style="top:175.20px;font:normal 13px/13px 'Liberation Sans', sans-serif;color:#262626;white-space:nowrap;left:592.5px;width:1000px;text-align:center;">I</div><div style="left:1129px;top:173px;width:1px;height:16px;background:#c6c6c6;"></div><div style="top:175.20px;font:normal 13px/13px 'Liberation Sans', sans-serif;color:#262626;white-space:nowrap;left:671.5px;width:1000px;text-align:center;">J</div><div style="left:1214px;top:173px;width:1px;height:16px;background:#c6c6c6;"></div><div style="top:175.20px;font:normal 13px/13px 'Liberation Sans', sans-serif;color:#262626;white-space:nowrap;left:753.0px;width:1000px;text-align:center;">K</div><div style="left:1292px;top:173px;width:1px;height:16px;background:#c6c6c6;"></div><div style="top:175.20px;font:normal 13px/13px 'Liberation Sans', sans-serif;color:#262626;white-space:nowrap;left:861.5px;width:1000px;text-align:center;">L</div><div style="left:1432px;top:173px;width:113px;height:16px;background:#d2d2d2;"></div><div style="left:1431px;top:188px;width:115px;height:2px;background:#217346;"></div><div style="left:1431px;top:173px;width:1px;height:16px;background:#c6c6c6;"></div><div style="top:175.20px;font:normal 13px/13px 'Liberation Sans', sans-serif;color:#217346;white-space:nowrap;left:988.0px;width:1000px;text-align:center;">M</div><div style="left:1545px;top:173px;width:1px;height:16px;background:#c6c6c6;"></div><div style="top:175.20px;font:normal 13px/13px 'Liberation Sans', sans-serif;color:#262626;white-space:nowrap;left:1095.5px;width:1000px;text-align:center;">N</div><div style="left:1646px;top:173px;width:1px;height:16px;background:#c6c6c6;"></div><div style="top:175.20px;font:normal 13px/13px 'Liberation Sans', sans-serif;color:#262626;white-space:nowrap;left:1197.0px;width:1000px;text-align:center;">O</div><div style="left:1748px;top:173px;width:1px;height:16px;background:#c6c6c6;"></div><div style="top:175.20px;font:normal 13px/13px 'Liberation Sans', sans-serif;color:#262626;white-space:nowrap;left:1295.0px;width:1000px;text-align:center;">P</div><div style="left:1842px;top:173px;width:1px;height:16px;background:#c6c6c6;"></div><div style="top:175.20px;font:normal 13px/13px 'Liberation Sans', sans-serif;color:#262626;white-space:nowrap;left:1396.0px;width:1000px;text-align:center;">Q</div><div style="left:2px;top:189px;width:1888px;height:1px;background:#9b9b9b;"></div><div style="left:17px;top:190px;width:1873px;height:770px;background:#ffffff;"></div><div style="left:2px;top:190px;width:14px;height:770px;background:#e6e6e6;"></div><div style="left:16px;top:190px;width:1px;height:770px;background:#9b9b9b;"></div><div style="left:17px;top:190px;width:1528px;height:68px;background:#f4b183;"></div><div style="left:1545px;top:190px;width:344px;height:68px;background:#9dc3e6;"></div><div style="left:160px;top:258px;width:1px;height:702px;background:#d4d4d4;"></div><div style="left:285px;top:258px;width:1px;height:702px;background:#d4d4d4;"></div><div style="left:452px;top:258px;width:1px;height:702px;background:#d4d4d4;"></div><div style="left:604px;top:258px;width:1px;height:702px;background:#d4d4d4;"></div><div style="left:675px;top:258px;width:1px;height:702px;background:#d4d4d4;"></div><div style="left:746px;top:258px;width:1px;height:702px;background:#d4d4d4;"></div><div style="left:901px;top:258px;width:1px;height:702px;background:#d4d4d4;"></div><div style="left:1056px;top:258px;width:1px;height:702px;background:#d4d4d4;"></div><div style="left:1129px;top:258px;width:1px;height:702px;background:#d4d4d4;"></div><div style="left:1214px;top:258px;width:1px;height:702px;background:#d4d4d4;"></div><div style="left:1292px;top:258px;width:1px;height:702px;background:#d4d4d4;"></div><div style="left:1431px;top:258px;width:1px;height:702px;background:#d4d4d4;"></div><div style="left:1545px;top:258px;width:1px;height:702px;background:#d4d4d4;"></div><div style="left:1646px;top:258px;width:1px;height:702px;background:#d4d4d4;"></div><div style="left:1748px;top:258px;width:1px;height:702px;background:#d4d4d4;"></div><div style="left:1842px;top:258px;width:1px;height:702px;background:#d4d4d4;"></div><div style="left:17px;top:274px;width:1873px;height:1px;background:#d4d4d4;"></div><div style="left:2px;top:274px;width:14px;height:1px;background:#b4b4b4;"></div><div style="left:17px;top:291px;width:1873px;height:1px;background:#d4d4d4;"></div><div style="left:2px;top:291px;width:14px;height:1px;background:#b4b4b4;"></div><div style="left:17px;top:308px;width:1873px;height:1px;background:#d4d4d4;"></div><div style="left:2px;top:308px;width:14px;height:1px;background:#b4b4b4;"></div><div style="left:17px;top:325px;width:1873px;height:1px;background:#d4d4d4;"></div><div style="left:2px;top:325px;width:14px;height:1px;background:#b4b4b4;"></div><div style="left:17px;top:342px;width:1873px;height:1px;background:#d4d4d4;"></div><div style="left:2px;top:342px;width:14px;height:1px;background:#b4b4b4;"></div><div style="left:17px;top:359px;width:1873px;height:1px;background:#d4d4d4;"></div><div style="left:2px;top:359px;width:14px;height:1px;background:#b4b4b4;"></div><div style="left:17px;top:376px;width:1873px;height:1px;background:#d4d4d4;"></div><div style="left:2px;top:376px;width:14px;height:1px;background:#b4b4b4;"></div><div style="left:17px;top:393px;width:1873px;height:1px;background:#d4d4d4;"></div><div style="left:2px;top:393px;width:14px;height:1px;background:#b4b4b4;"></div><div style="left:17px;top:427px;width:1873px;height:1px;background:#d4d4d4;"></div><div style="left:2px;top:427px;width:14px;height:1px;background:#b4b4b4;"></div><div style="left:17px;top:444px;width:1873px;height:1px;background:#d4d4d4;"></div><div style="left:2px;top:444px;width:14px;height:1px;background:#b4b4b4;"></div><div style="left:17px;top:461px;width:1873px;height:1px;background:#d4d4d4;"></div><div style="left:2px;top:461px;width:14px;height:1px;background:#b4b4b4;"></div><div style="left:17px;top:478px;width:1873px;height:1px;background:#d4d4d4;"></div><div style="left:2px;top:478px;width:14px;height:1px;background:#b4b4b4;"></div><div style="left:17px;top:495px;width:1873px;height:1px;background:#d4d4d4;"></div><div style="left:2px;top:495px;width:14px;height:1px;background:#b4b4b4;"></div><div style="left:17px;top:512px;width:1873px;height:1px;background:#d4d4d4;"></div><div style="left:2px;top:512px;width:14px;height:1px;background:#b4b4b4;"></div><div style="left:17px;top:529px;width:1873px;height:1px;background:#d4d4d4;"></div><div style="left:2px;top:529px;width:14px;height:1px;background:#b4b4b4;"></div><div style="left:17px;top:546px;width:1873px;height:1px;background:#d4d4d4;"></div><div style="left:2px;top:546px;width:14px;height:1px;background:#b4b4b4;"></div><div style="left:17px;top:563px;width:1873px;height:1px;background:#d4d4d4;"></div><div style="left:2px;top:563px;width:14px;height:1px;background:#b4b4b4;"></div><div style="left:17px;top:580px;width:1873px;height:1px;background:#d4d4d4;"></div><div style="left:2px;top:580px;width:14px;height:1px;background:#b4b4b4;"></div><div style="left:17px;top:597px;width:1873px;height:1px;background:#d4d4d4;"></div><div style="left:2px;top:597px;width:14px;height:1px;background:#b4b4b4;"></div><div style="left:17px;top:614px;width:1873px;height:1px;background:#d4d4d4;"></div><div style="left:2px;top:614px;width:14px;height:1px;background:#b4b4b4;"></div><div style="left:17px;top:631px;width:1873px;height:1px;background:#d4d4d4;"></div><div style="left:2px;top:631px;width:14px;height:1px;background:#b4b4b4;"></div><div style="left:17px;top:648px;width:1873px;height:1px;background:#d4d4d4;"></div><div style="left:2px;top:648px;width:14px;height:1px;background:#b4b4b4;"></div><div style="left:17px;top:665px;width:1873px;height:1px;background:#d4d4d4;"></div><div style="left:2px;top:665px;width:14px;height:1px;background:#b4b4b4;"></div><div style="left:17px;top:682px;width:1873px;height:1px;background:#d4d4d4;"></div><div style="left:2px;top:682px;width:14px;height:1px;background:#b4b4b4;"></div><div style="left:17px;top:699px;width:1873px;height:1px;background:#d4d4d4;"></div><div style="left:2px;top:699px;width:14px;height:1px;background:#b4b4b4;"></div><div style="left:17px;top:716px;width:1873px;height:1px;background:#d4d4d4;"></div><div style="left:2px;top:716px;width:14px;height:1px;background:#b4b4b4;"></div><div style="left:17px;top:733px;width:1873px;height:1px;background:#d4d4d4;"></div><div style="left:2px;top:733px;width:14px;height:1px;background:#b4b4b4;"></div><div style="left:17px;top:750px;width:1873px;height:1px;background:#d4d4d4;"></div><div style="left:2px;top:750px;width:14px;height:1px;background:#b4b4b4;"></div><div style="left:17px;top:767px;width:1873px;height:1px;background:#d4d4d4;"></div><div style="left:2px;top:767px;width:14px;height:1px;background:#b4b4b4;"></div><div style="left:17px;top:784px;width:1873px;height:1px;background:#d4d4d4;"></div><div style="left:2px;top:784px;width:14px;height:1px;background:#b4b4b4;"></div><div style="left:17px;top:801px;width:1873px;height:1px;background:#d4d4d4;"></div><div style="left:2px;top:801px;width:14px;height:1px;background:#b4b4b4;"></div><div style="left:17px;top:818px;width:1873px;height:1px;background:#d4d4d4;"></div><div style="left:2px;top:818px;width:14px;height:1px;background:#b4b4b4;"></div><div style="left:17px;top:835px;width:1873px;height:1px;background:#d4d4d4;"></div><div style="left:2px;top:835px;width:14px;height:1px;background:#b4b4b4;"></div><div style="left:17px;top:852px;width:1873px;height:1px;background:#d4d4d4;"></div><div style="left:2px;top:852px;width:14px;height:1px;background:#b4b4b4;"></div><div style="left:17px;top:869px;width:1873px;height:1px;background:#d4d4d4;"></div><div style="left:2px;top:869px;width:14px;height:1px;background:#b4b4b4;"></div><div style="left:17px;top:886px;width:1873px;height:1px;background:#d4d4d4;"></div><div style="left:2px;top:886px;width:14px;height:1px;background:#b4b4b4;"></div><div style="left:17px;top:903px;width:1873px;height:1px;background:#d4d4d4;"></div><div style="left:2px;top:903px;width:14px;height:1px;background:#b4b4b4;"></div><div style="left:17px;top:920px;width:1873px;height:1px;background:#d4d4d4;"></div><div style="left:2px;top:920px;width:14px;height:1px;background:#b4b4b4;"></div><div style="left:17px;top:937px;width:1873px;height:1px;background:#d4d4d4;"></div><div style="left:2px;top:937px;width:14px;height:1px;background:#b4b4b4;"></div><div style="left:17px;top:954px;width:1873px;height:1px;background:#d4d4d4;"></div><div style="left:2px;top:954px;width:14px;height:1px;background:#b4b4b4;"></div><div style="left:2px;top:257px;width:14px;height:1px;background:#b4b4b4;"></div><div style="left:1889px;top:189px;width:1px;height:771px;background:#9b9b9b;"></div><div class="c" style="left:2px;top:190px;width:14px;height:770px;"><div style="left:-18.5px;top:52.00px;width:40px;text-align:center;font:13px/13px 'Liberation Sans', sans-serif;color:#262626;">1</div><div style="left:-18.5px;top:69.00px;width:40px;text-align:center;font:13px/13px 'Liberation Sans', sans-serif;color:#262626;">2</div><div style="left:-18.5px;top:86.00px;width:40px;text-align:center;font:13px/13px 'Liberation Sans', sans-serif;color:#262626;">3</div><div style="left:-18.5px;top:103.00px;width:40px;text-align:center;font:13px/13px 'Liberation Sans', sans-serif;color:#262626;">4</div><div style="left:-18.5px;top:120.00px;width:40px;text-align:center;font:13px/13px 'Liberation Sans', sans-serif;color:#262626;">5</div><div style="left:-18.5px;top:137.00px;width:40px;text-align:center;font:13px/13px 'Liberation Sans', sans-serif;color:#262626;">6</div><div style="left:-18.5px;top:154.00px;width:40px;text-align:center;font:13px/13px 'Liberation Sans', sans-serif;color:#262626;">7</div><div style="left:-18.5px;top:171.00px;width:40px;text-align:center;font:13px/13px 'Liberation Sans', sans-serif;color:#262626;">8</div><div style="left:-18.5px;top:188.00px;width:40px;text-align:center;font:13px/13px 'Liberation Sans', sans-serif;color:#262626;">9</div><div style="left:-18.5px;top:222.00px;width:40px;text-align:center;font:13px/13px 'Liberation Sans', sans-serif;color:#262626;">10</div><div style="left:-18.5px;top:239.00px;width:40px;text-align:center;font:13px/13px 'Liberation Sans', sans-serif;color:#262626;">11</div><div style="left:-18.5px;top:256.00px;width:40px;text-align:center;font:13px/13px 'Liberation Sans', sans-serif;color:#262626;">12</div><div style="left:-18.5px;top:273.00px;width:40px;text-align:center;font:13px/13px 'Liberation Sans', sans-serif;color:#262626;">13</div><div style="left:-18.5px;top:290.00px;width:40px;text-align:center;font:13px/13px 'Liberation Sans', sans-serif;color:#262626;">14</div><div style="left:-18.5px;top:307.00px;width:40px;text-align:center;font:13px/13px 'Liberation Sans', sans-serif;color:#262626;">15</div><div style="left:-18.5px;top:324.00px;width:40px;text-align:center;font:13px/13px 'Liberation Sans', sans-serif;color:#262626;">16</div><div style="left:-18.5px;top:341.00px;width:40px;text-align:center;font:13px/13px 'Liberation Sans', sans-serif;color:#262626;">17</div><div style="left:-18.5px;top:358.00px;width:40px;text-align:center;font:13px/13px 'Liberation Sans', sans-serif;color:#262626;">18</div><div style="left:-18.5px;top:375.00px;width:40px;text-align:center;font:13px/13px 'Liberation Sans', sans-serif;color:#262626;">19</div><div style="left:-18.5px;top:392.00px;width:40px;text-align:center;font:13px/13px 'Liberation Sans', sans-serif;color:#262626;">20</div><div style="left:-18.5px;top:409.00px;width:40px;text-align:center;font:13px/13px 'Liberation Sans', sans-serif;color:#262626;">21</div><div style="left:-18.5px;top:426.00px;width:40px;text-align:center;font:13px/13px 'Liberation Sans', sans-serif;color:#262626;">22</div><div style="left:-18.5px;top:443.00px;width:40px;text-align:center;font:13px/13px 'Liberation Sans', sans-serif;color:#262626;">23</div><div style="left:-18.5px;top:460.00px;width:40px;text-align:center;font:13px/13px 'Liberation Sans', sans-serif;color:#262626;">24</div><div style="left:-18.5px;top:477.00px;width:40px;text-align:center;font:13px/13px 'Liberation Sans', sans-serif;color:#262626;">25</div><div style="left:-18.5px;top:494.00px;width:40px;text-align:center;font:13px/13px 'Liberation Sans', sans-serif;color:#262626;">26</div><div style="left:-18.5px;top:511.00px;width:40px;text-align:center;font:13px/13px 'Liberation Sans', sans-serif;color:#262626;">27</div><div style="left:-18.5px;top:528.00px;width:40px;text-align:center;font:13px/13px 'Liberation Sans', sans-serif;color:#262626;">28</div><div style="left:-18.5px;top:545.00px;width:40px;text-align:center;font:13px/13px 'Liberation Sans', sans-serif;color:#262626;">29</div><div style="left:-18.5px;top:562.00px;width:40px;text-align:center;font:13px/13px 'Liberation Sans', sans-serif;color:#262626;">30</div><div style="left:-18.5px;top:579.00px;width:40px;text-align:center;font:13px/13px 'Liberation Sans', sans-serif;color:#262626;">31</div><div style="left:-18.5px;top:596.00px;width:40px;text-align:center;font:13px/13px 'Liberation Sans', sans-serif;color:#262626;">32</div><div style="left:-18.5px;top:613.00px;width:40px;text-align:center;font:13px/13px 'Liberation Sans', sans-serif;color:#262626;">33</div><div style="left:-18.5px;top:630.00px;width:40px;text-align:center;font:13px/13px 'Liberation Sans', sans-serif;color:#262626;">34</div><div style="left:-18.5px;top:647.00px;width:40px;text-align:center;font:13px/13px 'Liberation Sans', sans-serif;color:#262626;">35</div><div style="left:-18.5px;top:664.00px;width:40px;text-align:center;font:13px/13px 'Liberation Sans', sans-serif;color:#262626;">36</div><div style="left:-18.5px;top:681.00px;width:40px;text-align:center;font:13px/13px 'Liberation Sans', sans-serif;color:#262626;">37</div><div style="left:-18.5px;top:698.00px;width:40px;text-align:center;font:13px/13px 'Liberation Sans', sans-serif;color:#262626;">38</div><div style="left:-18.5px;top:715.00px;width:40px;text-align:center;font:13px/13px 'Liberation Sans', sans-serif;color:#262626;">39</div><div style="left:-18.5px;top:732.00px;width:40px;text-align:center;font:13px/13px 'Liberation Sans', sans-serif;color:#262626;">40</div><div style="left:-18.5px;top:749.00px;width:40px;text-align:center;font:13px/13px 'Liberation Sans', sans-serif;color:#262626;">41</div><div style="left:-18.5px;top:766.00px;width:40px;text-align:center;font:13px/13px 'Liberation Sans', sans-serif;color:#262626;">42</div></div><div class="c" style="left:17px;top:258px;width:143px;height:16px;"><div style="top:1.64px;font:13.33px/13.33px 'Liberation Serif', serif;color:#000;white-space:pre;letter-spacing:-0.550px;left:2px;">50207</div></div><svg style="left:17px;top:258px;" width="6" height="6" viewBox="0 0 6 6"><path d="M0 0 H6 L0 6 Z" fill="#008000"/></svg><div class="c" style="left:161px;top:258px;width:124px;height:16px;"><div style="top:1.64px;font:13.33px/13.33px 'Liberation Serif', serif;color:#000;white-space:pre;letter-spacing:-0.145px;left:2px;">Thiết bị âm thanh</div></div><div class="c" style="left:286px;top:258px;width:166px;height:16px;"><div style="top:1.64px;font:13.33px/13.33px 'Liberation Serif', serif;color:#000;white-space:pre;letter-spacing:-0.464px;left:2px;">AM LY</div></div><div class="c" style="left:453px;top:258px;width:151px;height:16px;"><div style="top:1.64px;font:13.33px/13.33px 'Liberation Serif', serif;color:#000;white-space:pre;letter-spacing:-0.425px;left:2px;">Am Ly JARGUAR - SUHIOUNG</div></div><div class="c" style="left:605px;top:258px;width:70px;height:16px;"><div style="top:1.64px;font:13.33px/13.33px 'Liberation Serif', serif;color:#000;white-space:pre;letter-spacing:-0.550px;right:2px;">1</div></div><div class="c" style="left:676px;top:258px;width:70px;height:16px;"><div style="top:1.64px;font:13.33px/13.33px 'Liberation Serif', serif;color:#000;white-space:pre;letter-spacing:-0.335px;left:2px;">Bộ</div></div><div class="c" style="left:747px;top:258px;width:154px;height:16px;"><div style="top:1.64px;font:13.33px/13.33px 'Liberation Serif', serif;color:#000;white-space:pre;letter-spacing:-0.550px;left:2px;">HTT3</div></div><div class="c" style="left:902px;top:258px;width:154px;height:16px;"><div style="top:1.64px;font:13.33px/13.33px 'Liberation Serif', serif;color:#000;white-space:pre;letter-spacing:-0.274px;left:2px;">Nguồn NSNN cấp</div></div><div class="c" style="left:1057px;top:258px;width:72px;height:16px;"><div style="top:1.64px;font:13.33px/13.33px 'Liberation Serif', serif;color:#000;white-space:pre;letter-spacing:-0.443px;left:2px;">JARGUAR - LD</div></div><div class="c" style="left:1215px;top:258px;width:77px;height:16px;"><div style="top:1.64px;font:13.33px/13.33px 'Liberation Serif', serif;color:#000;white-space:pre;letter-spacing:-0.550px;right:2px;">0</div></div><div class="c" style="left:1546px;top:258px;width:100px;height:16px;"><div style="top:1.64px;font:13.33px/13.33px 'Liberation Serif', serif;color:#000;white-space:pre;letter-spacing:-0.550px;left:0px;width:101px;text-align:center;">11/30/2014</div></div><div class="c" style="left:1647px;top:258px;width:101px;height:16px;"><div style="top:1.64px;font:13.33px/13.33px 'Liberation Serif', serif;color:#000;white-space:pre;letter-spacing:-0.550px;left:0px;width:102px;text-align:center;">11/30/2014</div></div><div class="c" style="left:1749px;top:258px;width:93px;height:16px;"><div style="top:1.64px;font:13.33px/13.33px 'Liberation Serif', serif;color:#000;white-space:pre;letter-spacing:-0.550px;left:0px;width:94px;text-align:center;">11/30/2014</div></div><div class="c" style="left:1843px;top:258px;width:46px;height:16px;"><div style="top:1.64px;font:13.33px/13.33px 'Liberation Serif', serif;color:#000;white-space:pre;letter-spacing:-0.550px;left:0px;width:108px;text-align:center;">1/1/2015</div></div><div class="c" style="left:17px;top:275px;width:143px;height:16px;"><div style="top:1.64px;font:13.33px/13.33px 'Liberation Serif', serif;color:#000;white-space:pre;letter-spacing:-0.550px;left:2px;">50207</div></div><svg style="left:17px;top:275px;" width="6" height="6" viewBox="0 0 6 6"><path d="M0 0 H6 L0 6 Z" fill="#008000"/></svg><div class="c" style="left:161px;top:275px;width:124px;height:16px;"><div style="top:1.64px;font:13.33px/13.33px 'Liberation Serif', serif;color:#000;white-space:pre;letter-spacing:-0.145px;left:2px;">Thiết bị âm thanh</div></div><div class="c" style="left:286px;top:275px;width:166px;height:16px;"><div style="top:1.64px;font:13.33px/13.33px 'Liberation Serif', serif;color:#000;white-space:pre;letter-spacing:-0.478px;left:2px;">AMLY- LOAMAY</div></div><div class="c" style="left:453px;top:275px;width:151px;height:16px;"><div style="top:1.64px;font:13.33px/13.33px 'Liberation Serif', serif;color:#000;white-space:pre;letter-spacing:-0.359px;left:2px;">Am ly JARGUAR - LD</div></div><div class="c" style="left:605px;top:275px;width:70px;height:16px;"><div style="top:1.64px;font:13.33px/13.33px 'Liberation Serif', serif;color:#000;white-space:pre;letter-spacing:-0.550px;right:2px;">1</div></div><div class="c" style="left:676px;top:275px;width:70px;height:16px;"><div style="top:1.64px;font:13.33px/13.33px 'Liberation Serif', serif;color:#000;white-space:pre;letter-spacing:-0.335px;left:2px;">Bộ</div></div><div class="c" style="left:747px;top:275px;width:154px;height:16px;"><div style="top:1.64px;font:13.33px/13.33px 'Liberation Serif', serif;color:#000;white-space:pre;letter-spacing:-0.550px;left:2px;">NT</div></div><div class="c" style="left:902px;top:275px;width:154px;height:16px;"><div style="top:1.64px;font:13.33px/13.33px 'Liberation Serif', serif;color:#000;white-space:pre;letter-spacing:-0.274px;left:2px;">Nguồn NSNN cấp</div></div><div class="c" style="left:1057px;top:275px;width:72px;height:16px;"><div style="top:1.64px;font:13.33px/13.33px 'Liberation Serif', serif;color:#000;white-space:pre;letter-spacing:-0.472px;left:2px;"> JARGUAR-LD</div></div><div class="c" style="left:1215px;top:275px;width:77px;height:16px;"><div style="top:1.64px;font:13.33px/13.33px 'Liberation Serif', serif;color:#000;white-space:pre;letter-spacing:-0.550px;right:2px;">0</div></div><div class="c" style="left:1546px;top:275px;width:100px;height:16px;"><div style="top:1.64px;font:13.33px/13.33px 'Liberation Serif', serif;color:#000;white-space:pre;letter-spacing:-0.550px;left:0px;width:101px;text-align:center;">11/30/2014</div></div><div class="c" style="left:1647px;top:275px;width:101px;height:16px;"><div style="top:1.64px;font:13.33px/13.33px 'Liberation Serif', serif;color:#000;white-space:pre;letter-spacing:-0.550px;left:0px;width:102px;text-align:center;">11/30/2014</div></div><div class="c" style="left:1749px;top:275px;width:93px;height:16px;"><div style="top:1.64px;font:13.33px/13.33px 'Liberation Serif', serif;color:#000;white-space:pre;letter-spacing:-0.550px;left:0px;width:94px;text-align:center;">11/30/2014</div></div><div class="c" style="left:1843px;top:275px;width:46px;height:16px;"><div style="top:1.64px;font:13.33px/13.33px 'Liberation Serif', serif;color:#000;white-space:pre;letter-spacing:-0.550px;left:0px;width:108px;text-align:center;">1/1/2015</div></div><div class="c" style="left:17px;top:292px;width:143px;height:16px;"><div style="top:1.64px;font:13.33px/13.33px 'Liberation Serif', serif;color:#000;white-space:pre;letter-spacing:-0.550px;left:2px;">50220</div></div><svg style="left:17px;top:292px;" width="6" height="6" viewBox="0 0 6 6"><path d="M0 0 H6 L0 6 Z" fill="#008000"/></svg><div class="c" style="left:161px;top:292px;width:124px;height:16px;"><div style="top:1.64px;font:13.33px/13.33px 'Liberation Serif', serif;color:#000;white-space:pre;letter-spacing:-0.144px;left:2px;">Bàn ghế hội trường</div></div><div class="c" style="left:286px;top:292px;width:166px;height:16px;"><div style="top:1.64px;font:13.33px/13.33px 'Liberation Serif', serif;color:#000;white-space:pre;letter-spacing:-0.511px;left:2px;">BANHT2022.1</div></div><div class="c" style="left:453px;top:292px;width:151px;height:16px;"><div style="top:1.64px;font:13.33px/13.33px 'Liberation Serif', serif;color:#000;white-space:pre;letter-spacing:-0.163px;left:2px;">Bàn gỗ lim</div></div><div class="c" style="left:605px;top:292px;width:70px;height:16px;"><div style="top:1.64px;font:13.33px/13.33px 'Liberation Serif', serif;color:#000;white-space:pre;letter-spacing:-0.550px;right:2px;">1</div></div><div class="c" style="left:676px;top:292px;width:70px;height:16px;"><div style="top:1.64px;font:13.33px/13.33px 'Liberation Serif', serif;color:#000;white-space:pre;letter-spacing:-0.206px;left:2px;">Chiếc</div></div><div class="c" style="left:747px;top:292px;width:154px;height:16px;"><div style="top:1.64px;font:13.33px/13.33px 'Liberation Serif', serif;color:#000;white-space:pre;letter-spacing:-0.550px;left:2px;">HTT3</div></div><div class="c" style="left:902px;top:292px;width:154px;height:16px;"><div style="top:1.64px;font:13.33px/13.33px 'Liberation Serif', serif;color:#000;white-space:pre;letter-spacing:-0.274px;left:2px;">Nguồn NSNN cấp</div></div><div class="c" style="left:1215px;top:292px;width:77px;height:16px;"><div style="top:1.64px;font:13.33px/13.33px 'Liberation Serif', serif;color:#000;white-space:pre;letter-spacing:-0.550px;right:2px;">2022</div></div><div class="c" style="left:1293px;top:292px;width:138px;height:16px;"><div style="top:1.64px;font:13.33px/13.33px 'Liberation Serif', serif;color:#000;white-space:pre;letter-spacing:-0.228px;left:2px;">Việt Nam</div></div><div class="c" style="left:1546px;top:292px;width:100px;height:16px;"><div style="top:1.64px;font:13.33px/13.33px 'Liberation Serif', serif;color:#000;white-space:pre;letter-spacing:-0.550px;left:0px;width:101px;text-align:center;">8/30/2022</div></div><div class="c" style="left:1647px;top:292px;width:101px;height:16px;"><div style="top:1.64px;font:13.33px/13.33px 'Liberation Serif', serif;color:#000;white-space:pre;letter-spacing:-0.550px;left:0px;width:102px;text-align:center;">8/30/2022</div></div><div class="c" style="left:1749px;top:292px;width:93px;height:16px;"><div style="top:1.64px;font:13.33px/13.33px 'Liberation Serif', serif;color:#000;white-space:pre;letter-spacing:-0.550px;left:0px;width:94px;text-align:center;">8/30/2022</div></div><div class="c" style="left:17px;top:309px;width:143px;height:16px;"><div style="top:1.64px;font:13.33px/13.33px 'Liberation Serif', serif;color:#000;white-space:pre;letter-spacing:-0.550px;left:2px;">50220</div></div><svg style="left:17px;top:309px;" width="6" height="6" viewBox="0 0 6 6"><path d="M0 0 H6 L0 6 Z" fill="#008000"/></svg><div class="c" style="left:161px;top:309px;width:124px;height:16px;"><div style="top:1.64px;font:13.33px/13.33px 'Liberation Serif', serif;color:#000;white-space:pre;letter-spacing:-0.144px;left:2px;">Bàn ghế hội trường</div></div><div class="c" style="left:286px;top:309px;width:166px;height:16px;"><div style="top:1.64px;font:13.33px/13.33px 'Liberation Serif', serif;color:#000;white-space:pre;letter-spacing:-0.378px;left:2px;">Ban01</div></div><div class="c" style="left:453px;top:309px;width:151px;height:16px;"><div style="top:1.64px;font:13.33px/13.33px 'Liberation Serif', serif;color:#000;white-space:pre;letter-spacing:-0.186px;left:2px;">Bàn test số 1</div></div><div class="c" style="left:605px;top:309px;width:70px;height:16px;"><div style="top:1.64px;font:13.33px/13.33px 'Liberation Serif', serif;color:#000;white-space:pre;letter-spacing:-0.550px;right:2px;">15</div></div><div class="c" style="left:676px;top:309px;width:70px;height:16px;"><div style="top:1.64px;font:13.33px/13.33px 'Liberation Serif', serif;color:#000;white-space:pre;letter-spacing:-0.206px;left:2px;">Chiếc</div></div><div class="c" style="left:747px;top:309px;width:154px;height:16px;"><div style="top:1.64px;font:13.33px/13.33px 'Liberation Serif', serif;color:#000;white-space:pre;letter-spacing:-0.550px;left:2px;">HTT3</div></div><div class="c" style="left:902px;top:309px;width:154px;height:16px;"><div style="top:1.64px;font:13.33px/13.33px 'Liberation Serif', serif;color:#000;white-space:pre;letter-spacing:-0.274px;left:2px;">Nguồn NSNN cấp</div></div><div class="c" style="left:1215px;top:309px;width:77px;height:16px;"><div style="top:1.64px;font:13.33px/13.33px 'Liberation Serif', serif;color:#000;white-space:pre;letter-spacing:-0.550px;right:2px;">2022</div></div><div class="c" style="left:1293px;top:309px;width:138px;height:16px;"><div style="top:1.64px;font:13.33px/13.33px 'Liberation Serif', serif;color:#000;white-space:pre;letter-spacing:-0.228px;left:2px;">Việt Nam</div></div><div class="c" style="left:1546px;top:309px;width:100px;height:16px;"><div style="top:1.64px;font:13.33px/13.33px 'Liberation Serif', serif;color:#000;white-space:pre;letter-spacing:-0.550px;left:0px;width:101px;text-align:center;">1/1/2022</div></div><div class="c" style="left:1647px;top:309px;width:101px;height:16px;"><div style="top:1.64px;font:13.33px/13.33px 'Liberation Serif', serif;color:#000;white-space:pre;letter-spacing:-0.550px;left:0px;width:102px;text-align:center;">1/1/2022</div></div><div class="c" style="left:1749px;top:309px;width:93px;height:16px;"><div style="top:1.64px;font:13.33px/13.33px 'Liberation Serif', serif;color:#000;white-space:pre;letter-spacing:-0.550px;left:0px;width:94px;text-align:center;">1/1/2022</div></div><div class="c" style="left:1843px;top:309px;width:46px;height:16px;"><div style="top:1.64px;font:13.33px/13.33px 'Liberation Serif', serif;color:#000;white-space:pre;letter-spacing:-0.550px;left:0px;width:108px;text-align:center;">1/1/2023</div></div><div class="c" style="left:17px;top:326px;width:143px;height:16px;"><div style="top:1.64px;font:13.33px/13.33px 'Liberation Serif', serif;color:#000;white-space:pre;letter-spacing:-0.550px;left:2px;">428</div></div><svg style="left:17px;top:326px;" width="6" height="6" viewBox="0 0 6 6"><path d="M0 0 H6 L0 6 Z" fill="#008000"/></svg><div class="c" style="left:161px;top:326px;width:124px;height:16px;"><div style="top:1.64px;font:13.33px/13.33px 'Liberation Serif', serif;color:#000;white-space:pre;letter-spacing:-0.136px;left:2px;">Các loại thiết bị văn phòng</div></div><div class="c" style="left:286px;top:326px;width:166px;height:16px;"><div style="top:1.64px;font:13.33px/13.33px 'Liberation Serif', serif;color:#000;white-space:pre;letter-spacing:-0.394px;left:2px;">BBieu1.2018</div></div><div class="c" style="left:453px;top:326px;width:151px;height:16px;"><div style="top:1.64px;font:13.33px/13.33px 'Liberation Serif', serif;color:#000;white-space:pre;letter-spacing:-0.171px;left:2px;">Bảng hiệu &quot;Đảng cộng sản Việt Nam&quot;</div></div><div class="c" style="left:605px;top:326px;width:70px;height:16px;"><div style="top:1.64px;font:13.33px/13.33px 'Liberation Serif', serif;color:#000;white-space:pre;letter-spacing:-0.550px;right:2px;">1</div></div><div class="c" style="left:676px;top:326px;width:70px;height:16px;"><div style="top:1.64px;font:13.33px/13.33px 'Liberation Serif', serif;color:#000;white-space:pre;letter-spacing:-0.120px;left:2px;">chiếc</div></div><div class="c" style="left:747px;top:326px;width:154px;height:16px;"><div style="top:1.64px;font:13.33px/13.33px 'Liberation Serif', serif;color:#000;white-space:pre;letter-spacing:-0.198px;left:2px;">Nhà Đa năng</div></div><div class="c" style="left:902px;top:326px;width:154px;height:16px;"><div style="top:1.64px;font:13.33px/13.33px 'Liberation Serif', serif;color:#000;white-space:pre;letter-spacing:-0.133px;left:2px;">Quỹ phát triển hoạt động sự nghiệp</div></div><div class="c" style="left:1215px;top:326px;width:77px;height:16px;"><div style="top:1.64px;font:13.33px/13.33px 'Liberation Serif', serif;color:#000;white-space:pre;letter-spacing:-0.550px;right:2px;">0</div></div><div class="c" style="left:1546px;top:326px;width:100px;height:16px;"><div style="top:1.64px;font:13.33px/13.33px 'Liberation Serif', serif;color:#000;white-space:pre;letter-spacing:-0.550px;left:0px;width:101px;text-align:center;">12/14/2018</div></div><div class="c" style="left:1647px;top:326px;width:101px;height:16px;"><div style="top:1.64px;font:13.33px/13.33px 'Liberation Serif', serif;color:#000;white-space:pre;letter-spacing:-0.550px;left:0px;width:102px;text-align:center;">12/14/2018</div></div><div class="c" style="left:1749px;top:326px;width:93px;height:16px;"><div style="top:1.64px;font:13.33px/13.33px 'Liberation Serif', serif;color:#000;white-space:pre;letter-spacing:-0.550px;left:0px;width:94px;text-align:center;">12/14/2018</div></div><div class="c" style="left:17px;top:343px;width:143px;height:16px;"><div style="top:1.64px;font:13.33px/13.33px 'Liberation Serif', serif;color:#000;white-space:pre;letter-spacing:-0.550px;left:2px;">428</div></div><svg style="left:17px;top:343px;" width="6" height="6" viewBox="0 0 6 6"><path d="M0 0 H6 L0 6 Z" fill="#008000"/></svg><div class="c" style="left:161px;top:343px;width:124px;height:16px;"><div style="top:1.64px;font:13.33px/13.33px 'Liberation Serif', serif;color:#000;white-space:pre;letter-spacing:-0.136px;left:2px;">Các loại thiết bị văn phòng</div></div><div class="c" style="left:286px;top:343px;width:166px;height:16px;"><div style="top:1.64px;font:13.33px/13.33px 'Liberation Serif', serif;color:#000;white-space:pre;letter-spacing:-0.394px;left:2px;">BBieu2.2018</div></div><div class="c" style="left:453px;top:343px;width:151px;height:16px;"><div style="top:1.64px;font:13.33px/13.33px 'Liberation Serif', serif;color:#000;white-space:pre;letter-spacing:-0.174px;left:2px;">Bảng hiệu trích 2 lời dẫn Bác Hồ</div></div><div class="c" style="left:605px;top:343px;width:70px;height:16px;"><div style="top:1.64px;font:13.33px/13.33px 'Liberation Serif', serif;color:#000;white-space:pre;letter-spacing:-0.550px;right:2px;">1</div></div><div class="c" style="left:676px;top:343px;width:70px;height:16px;"><div style="top:1.64px;font:13.33px/13.33px 'Liberation Serif', serif;color:#000;white-space:pre;letter-spacing:-0.120px;left:2px;">bộ</div></div><div class="c" style="left:747px;top:343px;width:154px;height:16px;"><div style="top:1.64px;font:13.33px/13.33px 'Liberation Serif', serif;color:#000;white-space:pre;letter-spacing:-0.198px;left:2px;">Nhà Đa năng</div></div><div class="c" style="left:902px;top:343px;width:154px;height:16px;"><div style="top:1.64px;font:13.33px/13.33px 'Liberation Serif', serif;color:#000;white-space:pre;letter-spacing:-0.133px;left:2px;">Quỹ phát triển hoạt động sự nghiệp</div></div><div class="c" style="left:1215px;top:343px;width:77px;height:16px;"><div style="top:1.64px;font:13.33px/13.33px 'Liberation Serif', serif;color:#000;white-space:pre;letter-spacing:-0.550px;right:2px;">0</div></div><div class="c" style="left:1546px;top:343px;width:100px;height:16px;"><div style="top:1.64px;font:13.33px/13.33px 'Liberation Serif', serif;color:#000;white-space:pre;letter-spacing:-0.550px;left:0px;width:101px;text-align:center;">12/14/2018</div></div><div class="c" style="left:1647px;top:343px;width:101px;height:16px;"><div style="top:1.64px;font:13.33px/13.33px 'Liberation Serif', serif;color:#000;white-space:pre;letter-spacing:-0.550px;left:0px;width:102px;text-align:center;">12/14/2018</div></div><div class="c" style="left:1749px;top:343px;width:93px;height:16px;"><div style="top:1.64px;font:13.33px/13.33px 'Liberation Serif', serif;color:#000;white-space:pre;letter-spacing:-0.550px;left:0px;width:94px;text-align:center;">12/14/2018</div></div><div class="c" style="left:17px;top:360px;width:143px;height:16px;"><div style="top:1.64px;font:13.33px/13.33px 'Liberation Serif', serif;color:#000;white-space:pre;letter-spacing:-0.550px;left:2px;">50115</div></div><svg style="left:17px;top:360px;" width="6" height="6" viewBox="0 0 6 6"><path d="M0 0 H6 L0 6 Z" fill="#008000"/></svg><div class="c" style="left:161px;top:360px;width:124px;height:16px;"><div style="top:1.64px;font:13.33px/13.33px 'Liberation Serif', serif;color:#000;white-space:pre;letter-spacing:-0.136px;left:2px;">Máy móc, thiết bị văn phòng</div></div><div class="c" style="left:286px;top:360px;width:166px;height:16px;"><div style="top:1.64px;font:13.33px/13.33px 'Liberation Serif', serif;color:#000;white-space:pre;letter-spacing:-0.464px;left:2px;">BCL 1</div></div><div class="c" style="left:453px;top:360px;width:151px;height:16px;"><div style="top:1.64px;font:13.33px/13.33px 'Liberation Serif', serif;color:#000;white-space:pre;letter-spacing:-0.176px;left:2px;">Bảng chống lóa Hàn Quốc</div></div><div class="c" style="left:605px;top:360px;width:70px;height:16px;"><div style="top:1.64px;font:13.33px/13.33px 'Liberation Serif', serif;color:#000;white-space:pre;letter-spacing:-0.550px;right:2px;">10</div></div><div class="c" style="left:676px;top:360px;width:70px;height:16px;"><div style="top:1.64px;font:13.33px/13.33px 'Liberation Serif', serif;color:#000;white-space:pre;letter-spacing:-0.206px;left:2px;">Chiếc</div></div><div class="c" style="left:747px;top:360px;width:154px;height:16px;"><div style="top:1.64px;font:13.33px/13.33px 'Liberation Serif', serif;color:#000;white-space:pre;letter-spacing:-0.550px;left:2px;">LH</div></div><div class="c" style="left:902px;top:360px;width:154px;height:16px;"><div style="top:1.64px;font:13.33px/13.33px 'Liberation Serif', serif;color:#000;white-space:pre;letter-spacing:-0.274px;left:2px;">Nguồn NSNN cấp</div></div><div class="c" style="left:1215px;top:360px;width:77px;height:16px;"><div style="top:1.64px;font:13.33px/13.33px 'Liberation Serif', serif;color:#000;white-space:pre;letter-spacing:-0.550px;right:2px;">0</div></div><div class="c" style="left:1546px;top:360px;width:100px;height:16px;"><div style="top:1.64px;font:13.33px/13.33px 'Liberation Serif', serif;color:#000;white-space:pre;letter-spacing:-0.550px;left:0px;width:101px;text-align:center;">1/1/2002</div></div><div class="c" style="left:1647px;top:360px;width:101px;height:16px;"><div style="top:1.64px;font:13.33px/13.33px 'Liberation Serif', serif;color:#000;white-space:pre;letter-spacing:-0.550px;left:0px;width:102px;text-align:center;">1/1/2002</div></div><div class="c" style="left:1749px;top:360px;width:93px;height:16px;"><div style="top:1.64px;font:13.33px/13.33px 'Liberation Serif', serif;color:#000;white-space:pre;letter-spacing:-0.550px;left:0px;width:94px;text-align:center;">1/1/2002</div></div><div class="c" style="left:1843px;top:360px;width:46px;height:16px;"><div style="top:1.64px;font:13.33px/13.33px 'Liberation Serif', serif;color:#000;white-space:pre;letter-spacing:-0.550px;left:0px;width:108px;text-align:center;">1/1/2003</div></div><div class="c" style="left:17px;top:377px;width:143px;height:16px;"><div style="top:1.64px;font:13.33px/13.33px 'Liberation Serif', serif;color:#000;white-space:pre;letter-spacing:-0.550px;left:2px;">50115</div></div><svg style="left:17px;top:377px;" width="6" height="6" viewBox="0 0 6 6"><path d="M0 0 H6 L0 6 Z" fill="#008000"/></svg><div class="c" style="left:161px;top:377px;width:124px;height:16px;"><div style="top:1.64px;font:13.33px/13.33px 'Liberation Serif', serif;color:#000;white-space:pre;letter-spacing:-0.136px;left:2px;">Máy móc, thiết bị văn phòng</div></div><div class="c" style="left:286px;top:377px;width:166px;height:16px;"><div style="top:1.64px;font:13.33px/13.33px 'Liberation Serif', serif;color:#000;white-space:pre;letter-spacing:-0.389px;left:2px;">BCL 2 .1</div></div><div class="c" style="left:453px;top:377px;width:151px;height:16px;"><div style="top:1.64px;font:13.33px/13.33px 'Liberation Serif', serif;color:#000;white-space:pre;letter-spacing:-0.176px;left:2px;">Bảng chống lóa Hàn Quốc</div></div><div class="c" style="left:605px;top:377px;width:70px;height:16px;"><div style="top:1.64px;font:13.33px/13.33px 'Liberation Serif', serif;color:#000;white-space:pre;letter-spacing:-0.550px;right:2px;">2</div></div><div class="c" style="left:676px;top:377px;width:70px;height:16px;"><div style="top:1.64px;font:13.33px/13.33px 'Liberation Serif', serif;color:#000;white-space:pre;letter-spacing:-0.206px;left:2px;">Chiếc</div></div><div class="c" style="left:747px;top:377px;width:154px;height:16px;"><div style="top:1.64px;font:13.33px/13.33px 'Liberation Serif', serif;color:#000;white-space:pre;letter-spacing:-0.550px;left:2px;">PHĐ</div></div><div class="c" style="left:902px;top:377px;width:154px;height:16px;"><div style="top:1.64px;font:13.33px/13.33px 'Liberation Serif', serif;color:#000;white-space:pre;letter-spacing:-0.274px;left:2px;">Nguồn NSNN cấp</div></div><div class="c" style="left:1215px;top:377px;width:77px;height:16px;"><div style="top:1.64px;font:13.33px/13.33px 'Liberation Serif', serif;color:#000;white-space:pre;letter-spacing:-0.550px;right:2px;">0</div></div><div class="c" style="left:1546px;top:377px;width:100px;height:16px;"><div style="top:1.64px;font:13.33px/13.33px 'Liberation Serif', serif;color:#000;white-space:pre;letter-spacing:-0.550px;left:0px;width:101px;text-align:center;">1/1/2004</div></div><div class="c" style="left:1647px;top:377px;width:101px;height:16px;"><div style="top:1.64px;font:13.33px/13.33px 'Liberation Serif', serif;color:#000;white-space:pre;letter-spacing:-0.550px;left:0px;width:102px;text-align:center;">1/1/2004</div></div><div class="c" style="left:1749px;top:377px;width:93px;height:16px;"><div style="top:1.64px;font:13.33px/13.33px 'Liberation Serif', serif;color:#000;white-space:pre;letter-spacing:-0.550px;left:0px;width:94px;text-align:center;">1/1/2004</div></div><div class="c" style="left:1843px;top:377px;width:46px;height:16px;"><div style="top:1.64px;font:13.33px/13.33px 'Liberation Serif', serif;color:#000;white-space:pre;letter-spacing:-0.550px;left:0px;width:108px;text-align:center;">1/1/2005</div></div><div class="c" style="left:17px;top:394px;width:143px;height:33px;"><div style="top:18.64px;font:13.33px/13.33px 'Liberation Serif', serif;color:#000;white-space:pre;letter-spacing:-0.550px;left:2px;">50115</div></div><svg style="left:17px;top:394px;" width="6" height="6" viewBox="0 0 6 6"><path d="M0 0 H6 L0 6 Z" fill="#008000"/></svg><div class="c" style="left:161px;top:394px;width:124px;height:33px;"><div style="top:18.64px;font:13.33px/13.33px 'Liberation Serif', serif;color:#000;white-space:pre;letter-spacing:-0.136px;left:2px;">Máy móc, thiết bị văn phòng</div></div><div class="c" style="left:286px;top:394px;width:166px;height:33px;"><div style="top:18.64px;font:13.33px/13.33px 'Liberation Serif', serif;color:#000;white-space:pre;letter-spacing:-0.144px;left:2px;">tự dài Test tên ký</div><div style="top:1.64px;font:13.33px/13.33px 'Liberation Serif', serif;color:#000;white-space:pre;letter-spacing:-0.149px;left:2px;">Test tên ký tự dài Test tên ký</div></div><div class="c" style="left:453px;top:394px;width:151px;height:33px;"><div style="top:18.64px;font:13.33px/13.33px 'Liberation Serif', serif;color:#000;white-space:pre;letter-spacing:-0.176px;left:2px;">Bảng chống lóa Hàn Quốc</div></div><div class="c" style="left:605px;top:394px;width:70px;height:33px;"><div style="top:18.64px;font:13.33px/13.33px 'Liberation Serif', serif;color:#000;white-space:pre;letter-spacing:-0.407px;right:2px;">1.5</div></div><div class="c" style="left:676px;top:394px;width:70px;height:33px;"><div style="top:18.64px;font:13.33px/13.33px 'Liberation Serif', serif;color:#000;white-space:pre;letter-spacing:-0.206px;left:2px;">Chiếc</div></div><div class="c" style="left:747px;top:394px;width:154px;height:33px;"><div style="top:18.64px;font:13.33px/13.33px 'Liberation Serif', serif;color:#000;white-space:pre;letter-spacing:-0.550px;left:2px;">LH</div></div><div class="c" style="left:902px;top:394px;width:154px;height:33px;"><div style="top:18.64px;font:13.33px/13.33px 'Liberation Serif', serif;color:#000;white-space:pre;letter-spacing:-0.274px;left:2px;">Nguồn NSNN cấp</div></div><div class="c" style="left:1215px;top:394px;width:77px;height:33px;"><div style="top:18.64px;font:13.33px/13.33px 'Liberation Serif', serif;color:#000;white-space:pre;letter-spacing:-0.550px;right:2px;">0</div></div><div class="c" style="left:1546px;top:394px;width:100px;height:33px;"><div style="top:18.64px;font:13.33px/13.33px 'Liberation Serif', serif;color:#000;white-space:pre;letter-spacing:-0.550px;left:0px;width:101px;text-align:center;">1/1/2004</div></div><div class="c" style="left:1647px;top:394px;width:101px;height:33px;"><div style="top:18.64px;font:13.33px/13.33px 'Liberation Serif', serif;color:#000;white-space:pre;letter-spacing:-0.550px;left:0px;width:102px;text-align:center;">1/1/2004</div></div><div class="c" style="left:1749px;top:394px;width:93px;height:33px;"><div style="top:18.64px;font:13.33px/13.33px 'Liberation Serif', serif;color:#000;white-space:pre;letter-spacing:-0.550px;left:0px;width:94px;text-align:center;">1/1/2004</div></div><div class="c" style="left:1843px;top:394px;width:46px;height:33px;"><div style="top:18.64px;font:13.33px/13.33px 'Liberation Serif', serif;color:#000;white-space:pre;letter-spacing:-0.550px;left:0px;width:108px;text-align:center;">1/1/2005</div></div><div class="c" style="left:17px;top:428px;width:143px;height:16px;"><div style="top:1.64px;font:13.33px/13.33px 'Liberation Serif', serif;color:#000;white-space:pre;letter-spacing:-0.550px;left:2px;">103</div></div><svg style="left:17px;top:428px;" width="6" height="6" viewBox="0 0 6 6"><path d="M0 0 H6 L0 6 Z" fill="#008000"/></svg><div class="c" style="left:161px;top:428px;width:124px;height:16px;"><div style="top:1.64px;font:13.33px/13.33px 'Liberation Serif', serif;color:#000;white-space:pre;letter-spacing:-0.335px;left:2px;">Cấp II</div></div><div class="c" style="left:286px;top:428px;width:166px;height:16px;"><div style="top:1.64px;font:13.33px/13.33px 'Liberation Serif', serif;color:#000;white-space:pre;letter-spacing:-0.407px;left:2px;">N C</div></div><div class="c" style="left:453px;top:428px;width:151px;height:16px;"><div style="top:1.64px;font:13.33px/13.33px 'Liberation Serif', serif;color:#000;white-space:pre;letter-spacing:-0.202px;left:2px;">Nhà học 3 tầng 12 lớp</div></div><div class="c" style="left:605px;top:428px;width:70px;height:16px;"><div style="top:1.64px;font:13.33px/13.33px 'Liberation Serif', serif;color:#000;white-space:pre;letter-spacing:-0.550px;right:2px;">1</div></div><div class="c" style="left:676px;top:428px;width:70px;height:16px;"><div style="top:1.64px;font:13.33px/13.33px 'Liberation Serif', serif;color:#000;white-space:pre;letter-spacing:-0.263px;left:2px;">Dãy</div></div><div class="c" style="left:747px;top:428px;width:154px;height:16px;"><div style="top:1.64px;font:13.33px/13.33px 'Liberation Serif', serif;color:#000;white-space:pre;letter-spacing:-0.550px;left:2px;">LH</div></div><div class="c" style="left:902px;top:428px;width:154px;height:16px;"><div style="top:1.64px;font:13.33px/13.33px 'Liberation Serif', serif;color:#000;white-space:pre;letter-spacing:-0.274px;left:2px;">Nguồn NSNN cấp</div></div><div class="c" style="left:1215px;top:428px;width:77px;height:16px;"><div style="top:1.64px;font:13.33px/13.33px 'Liberation Serif', serif;color:#000;white-space:pre;letter-spacing:-0.550px;right:2px;">2003</div></div><div class="c" style="left:1432px;top:428px;width:113px;height:16px;"><div style="top:1.64px;font:13.33px/13.33px 'Liberation Serif', serif;color:#000;white-space:pre;letter-spacing:-0.228px;left:2px;">Việt Nam</div></div><div class="c" style="left:1546px;top:428px;width:100px;height:16px;"><div style="top:1.64px;font:13.33px/13.33px 'Liberation Serif', serif;color:#000;white-space:pre;letter-spacing:-0.550px;left:0px;width:101px;text-align:center;">11/30/2018</div></div><div class="c" style="left:1647px;top:428px;width:101px;height:16px;"><div style="top:1.64px;font:13.33px/13.33px 'Liberation Serif', serif;color:#000;white-space:pre;letter-spacing:-0.550px;left:0px;width:102px;text-align:center;">11/30/2018</div></div><div class="c" style="left:1749px;top:428px;width:93px;height:16px;"><div style="top:1.64px;font:13.33px/13.33px 'Liberation Serif', serif;color:#000;white-space:pre;letter-spacing:-0.550px;left:0px;width:94px;text-align:center;">11/30/2018</div></div><div class="c" style="left:1843px;top:428px;width:46px;height:16px;"><div style="top:1.64px;font:13.33px/13.33px 'Liberation Serif', serif;color:#000;white-space:pre;letter-spacing:-0.550px;left:0px;width:108px;text-align:center;">1/1/2019</div></div><div class="c" style="left:17px;top:445px;width:143px;height:16px;"><div style="top:1.64px;font:13.33px/13.33px 'Liberation Serif', serif;color:#000;white-space:pre;letter-spacing:-0.550px;left:2px;">104</div></div><svg style="left:17px;top:445px;" width="6" height="6" viewBox="0 0 6 6"><path d="M0 0 H6 L0 6 Z" fill="#008000"/></svg><div class="c" style="left:161px;top:445px;width:124px;height:16px;"><div style="top:1.64px;font:13.33px/13.33px 'Liberation Serif', serif;color:#000;white-space:pre;letter-spacing:-0.366px;left:2px;">Cấp III</div></div><div class="c" style="left:286px;top:445px;width:166px;height:16px;"><div style="top:1.64px;font:13.33px/13.33px 'Liberation Serif', serif;color:#000;white-space:pre;letter-spacing:-0.550px;left:2px;">NBV</div></div><div class="c" style="left:453px;top:445px;width:151px;height:16px;"><div style="top:1.64px;font:13.33px/13.33px 'Liberation Serif', serif;color:#000;white-space:pre;letter-spacing:-0.163px;left:2px;">Nhà bảo vệ</div></div><div class="c" style="left:605px;top:445px;width:70px;height:16px;"><div style="top:1.64px;font:13.33px/13.33px 'Liberation Serif', serif;color:#000;white-space:pre;letter-spacing:-0.550px;right:2px;">1</div></div><div class="c" style="left:676px;top:445px;width:70px;height:16px;"><div style="top:1.64px;font:13.33px/13.33px 'Liberation Serif', serif;color:#000;white-space:pre;letter-spacing:-0.263px;left:2px;">Dãy</div></div><div class="c" style="left:747px;top:445px;width:154px;height:16px;"><div style="top:1.64px;font:13.33px/13.33px 'Liberation Serif', serif;color:#000;white-space:pre;letter-spacing:-0.550px;left:2px;">BV1</div></div><div class="c" style="left:902px;top:445px;width:154px;height:16px;"><div style="top:1.64px;font:13.33px/13.33px 'Liberation Serif', serif;color:#000;white-space:pre;letter-spacing:-0.274px;left:2px;">Nguồn NSNN cấp</div></div><div class="c" style="left:1215px;top:445px;width:77px;height:16px;"><div style="top:1.64px;font:13.33px/13.33px 'Liberation Serif', serif;color:#000;white-space:pre;letter-spacing:-0.550px;right:2px;">0</div></div><div class="c" style="left:1546px;top:445px;width:100px;height:16px;"><div style="top:1.64px;font:13.33px/13.33px 'Liberation Serif', serif;color:#000;white-space:pre;letter-spacing:-0.550px;left:0px;width:101px;text-align:center;">11/30/2019</div></div><div class="c" style="left:1647px;top:445px;width:101px;height:16px;"><div style="top:1.64px;font:13.33px/13.33px 'Liberation Serif', serif;color:#000;white-space:pre;letter-spacing:-0.550px;left:0px;width:102px;text-align:center;">11/30/2019</div></div><div class="c" style="left:1749px;top:445px;width:93px;height:16px;"><div style="top:1.64px;font:13.33px/13.33px 'Liberation Serif', serif;color:#000;white-space:pre;letter-spacing:-0.550px;left:0px;width:94px;text-align:center;">11/30/2019</div></div><div class="c" style="left:1843px;top:445px;width:46px;height:16px;"><div style="top:1.64px;font:13.33px/13.33px 'Liberation Serif', serif;color:#000;white-space:pre;letter-spacing:-0.550px;left:0px;width:108px;text-align:center;">1/1/2020</div></div><div class="c" style="left:17px;top:462px;width:143px;height:16px;"><div style="top:1.64px;font:13.33px/13.33px 'Liberation Serif', serif;color:#000;white-space:pre;letter-spacing:-0.550px;left:2px;">104</div></div><svg style="left:17px;top:462px;" width="6" height="6" viewBox="0 0 6 6"><path d="M0 0 H6 L0 6 Z" fill="#008000"/></svg><div class="c" style="left:161px;top:462px;width:124px;height:16px;"><div style="top:1.64px;font:13.33px/13.33px 'Liberation Serif', serif;color:#000;white-space:pre;letter-spacing:-0.366px;left:2px;">Cấp III</div></div><div class="c" style="left:286px;top:462px;width:166px;height:16px;"><div style="top:1.64px;font:13.33px/13.33px 'Liberation Serif', serif;color:#000;white-space:pre;letter-spacing:-0.496px;left:2px;">NCV-2017</div></div><div class="c" style="left:453px;top:462px;width:151px;height:16px;"><div style="top:1.64px;font:13.33px/13.33px 'Liberation Serif', serif;color:#000;white-space:pre;letter-spacing:-0.159px;left:2px;">Nhà công vụ</div></div><div class="c" style="left:605px;top:462px;width:70px;height:16px;"><div style="top:1.64px;font:13.33px/13.33px 'Liberation Serif', serif;color:#000;white-space:pre;letter-spacing:-0.550px;right:2px;">1234</div></div><div class="c" style="left:676px;top:462px;width:70px;height:16px;"><div style="top:1.64px;font:13.33px/13.33px 'Liberation Serif', serif;color:#000;white-space:pre;letter-spacing:-0.263px;left:2px;">Nhà</div></div><div class="c" style="left:747px;top:462px;width:154px;height:16px;"><div style="top:1.64px;font:13.33px/13.33px 'Liberation Serif', serif;color:#000;white-space:pre;letter-spacing:-0.550px;left:2px;">NT</div></div><div class="c" style="left:902px;top:462px;width:154px;height:16px;"><div style="top:1.64px;font:13.33px/13.33px 'Liberation Serif', serif;color:#000;white-space:pre;letter-spacing:-0.274px;left:2px;">Nguồn NSNN cấp</div></div><div class="c" style="left:1215px;top:462px;width:77px;height:16px;"><div style="top:1.64px;font:13.33px/13.33px 'Liberation Serif', serif;color:#000;white-space:pre;letter-spacing:-0.550px;right:2px;">0</div></div><div class="c" style="left:1546px;top:462px;width:100px;height:16px;"><div style="top:1.64px;font:13.33px/13.33px 'Liberation Serif', serif;color:#000;white-space:pre;letter-spacing:-0.550px;left:0px;width:101px;text-align:center;">12/14/2020</div></div><div class="c" style="left:1647px;top:462px;width:101px;height:16px;"><div style="top:1.64px;font:13.33px/13.33px 'Liberation Serif', serif;color:#000;white-space:pre;letter-spacing:-0.550px;left:0px;width:102px;text-align:center;">12/14/2020</div></div><div class="c" style="left:1749px;top:462px;width:93px;height:16px;"><div style="top:1.64px;font:13.33px/13.33px 'Liberation Serif', serif;color:#000;white-space:pre;letter-spacing:-0.550px;left:0px;width:94px;text-align:center;">12/14/2020</div></div><div class="c" style="left:1843px;top:462px;width:46px;height:16px;"><div style="top:1.64px;font:13.33px/13.33px 'Liberation Serif', serif;color:#000;white-space:pre;letter-spacing:-0.550px;left:0px;width:108px;text-align:center;">12/14/2021</div></div><div class="c" style="left:17px;top:479px;width:143px;height:16px;"><div style="top:1.64px;font:13.33px/13.33px 'Liberation Serif', serif;color:#000;white-space:pre;letter-spacing:-0.550px;left:2px;">105</div></div><svg style="left:17px;top:479px;" width="6" height="6" viewBox="0 0 6 6"><path d="M0 0 H6 L0 6 Z" fill="#008000"/></svg><div class="c" style="left:161px;top:479px;width:124px;height:16px;"><div style="top:1.64px;font:13.33px/13.33px 'Liberation Serif', serif;color:#000;white-space:pre;letter-spacing:-0.335px;left:2px;">Cấp IV</div></div><div class="c" style="left:286px;top:479px;width:166px;height:16px;"><div style="top:1.64px;font:13.33px/13.33px 'Liberation Serif', serif;color:#000;white-space:pre;letter-spacing:-0.496px;left:2px;">NDN-2017</div></div><div class="c" style="left:453px;top:479px;width:151px;height:16px;"><div style="top:1.64px;font:13.33px/13.33px 'Liberation Serif', serif;color:#000;white-space:pre;letter-spacing:-0.159px;left:2px;">Nhà đa năng</div></div><div class="c" style="left:605px;top:479px;width:70px;height:16px;"><div style="top:1.64px;font:13.33px/13.33px 'Liberation Serif', serif;color:#000;white-space:pre;letter-spacing:-0.550px;right:2px;">1</div></div><div class="c" style="left:676px;top:479px;width:70px;height:16px;"><div style="top:1.64px;font:13.33px/13.33px 'Liberation Serif', serif;color:#000;white-space:pre;letter-spacing:-0.263px;left:2px;">Nhà</div></div><div class="c" style="left:747px;top:479px;width:154px;height:16px;"><div style="top:1.64px;font:13.33px/13.33px 'Liberation Serif', serif;color:#000;white-space:pre;letter-spacing:-0.550px;left:2px;">NT</div></div><div class="c" style="left:902px;top:479px;width:154px;height:16px;"><div style="top:1.64px;font:13.33px/13.33px 'Liberation Serif', serif;color:#000;white-space:pre;letter-spacing:-0.274px;left:2px;">Nguồn NSNN cấp</div></div><div class="c" style="left:1215px;top:479px;width:77px;height:16px;"><div style="top:1.64px;font:13.33px/13.33px 'Liberation Serif', serif;color:#000;white-space:pre;letter-spacing:-0.550px;right:2px;">0</div></div><div class="c" style="left:1546px;top:479px;width:100px;height:16px;"><div style="top:1.64px;font:13.33px/13.33px 'Liberation Serif', serif;color:#000;white-space:pre;letter-spacing:-0.550px;left:0px;width:101px;text-align:center;">12/14/2021</div></div><div class="c" style="left:1647px;top:479px;width:101px;height:16px;"><div style="top:1.64px;font:13.33px/13.33px 'Liberation Serif', serif;color:#000;white-space:pre;letter-spacing:-0.550px;left:0px;width:102px;text-align:center;">12/14/2021</div></div><div class="c" style="left:1749px;top:479px;width:93px;height:16px;"><div style="top:1.64px;font:13.33px/13.33px 'Liberation Serif', serif;color:#000;white-space:pre;letter-spacing:-0.550px;left:0px;width:94px;text-align:center;">12/14/2021</div></div><div class="c" style="left:1843px;top:479px;width:46px;height:16px;"><div style="top:1.64px;font:13.33px/13.33px 'Liberation Serif', serif;color:#000;white-space:pre;letter-spacing:-0.550px;left:0px;width:108px;text-align:center;">12/14/2022</div></div><div class="c" style="left:17px;top:496px;width:143px;height:16px;"><div style="top:1.64px;font:13.33px/13.33px 'Liberation Serif', serif;color:#000;white-space:pre;letter-spacing:-0.550px;left:2px;">104</div></div><svg style="left:17px;top:496px;" width="6" height="6" viewBox="0 0 6 6"><path d="M0 0 H6 L0 6 Z" fill="#008000"/></svg><div class="c" style="left:161px;top:496px;width:124px;height:16px;"><div style="top:1.64px;font:13.33px/13.33px 'Liberation Serif', serif;color:#000;white-space:pre;letter-spacing:-0.366px;left:2px;">Cấp III</div></div><div class="c" style="left:286px;top:496px;width:166px;height:16px;"><div style="top:1.64px;font:13.33px/13.33px 'Liberation Serif', serif;color:#000;white-space:pre;letter-spacing:-0.496px;left:2px;">NHB-BM16</div></div><div class="c" style="left:453px;top:496px;width:151px;height:16px;"><div style="top:1.64px;font:13.33px/13.33px 'Liberation Serif', serif;color:#000;white-space:pre;letter-spacing:-0.135px;left:2px;">Nhà hiệu bộ và nhà học bộ môn</div></div><div class="c" style="left:605px;top:496px;width:70px;height:16px;"><div style="top:1.64px;font:13.33px/13.33px 'Liberation Serif', serif;color:#000;white-space:pre;letter-spacing:-0.550px;right:2px;">1</div></div><div class="c" style="left:676px;top:496px;width:70px;height:16px;"><div style="top:1.64px;font:13.33px/13.33px 'Liberation Serif', serif;color:#000;white-space:pre;letter-spacing:-0.263px;left:2px;">Nhà</div></div><div class="c" style="left:747px;top:496px;width:154px;height:16px;"><div style="top:1.64px;font:13.33px/13.33px 'Liberation Serif', serif;color:#000;white-space:pre;letter-spacing:-0.550px;left:2px;">NT</div></div><div class="c" style="left:902px;top:496px;width:154px;height:16px;"><div style="top:1.64px;font:13.33px/13.33px 'Liberation Serif', serif;color:#000;white-space:pre;letter-spacing:-0.274px;left:2px;">Nguồn NSNN cấp</div></div><div class="c" style="left:1215px;top:496px;width:77px;height:16px;"><div style="top:1.64px;font:13.33px/13.33px 'Liberation Serif', serif;color:#000;white-space:pre;letter-spacing:-0.550px;right:2px;">0</div></div><div class="c" style="left:1546px;top:496px;width:100px;height:16px;"><div style="top:1.64px;font:13.33px/13.33px 'Liberation Serif', serif;color:#000;white-space:pre;letter-spacing:-0.550px;left:0px;width:101px;text-align:center;">11/30/2018</div></div><div class="c" style="left:1647px;top:496px;width:101px;height:16px;"><div style="top:1.64px;font:13.33px/13.33px 'Liberation Serif', serif;color:#000;white-space:pre;letter-spacing:-0.550px;left:0px;width:102px;text-align:center;">11/30/2018</div></div><div class="c" style="left:1749px;top:496px;width:93px;height:16px;"><div style="top:1.64px;font:13.33px/13.33px 'Liberation Serif', serif;color:#000;white-space:pre;letter-spacing:-0.550px;left:0px;width:94px;text-align:center;">11/30/2018</div></div><div class="c" style="left:1843px;top:496px;width:46px;height:16px;"><div style="top:1.64px;font:13.33px/13.33px 'Liberation Serif', serif;color:#000;white-space:pre;letter-spacing:-0.550px;left:0px;width:108px;text-align:center;">1/1/2019</div></div><div class="c" style="left:17px;top:513px;width:143px;height:16px;"><div style="top:1.64px;font:13.33px/13.33px 'Liberation Serif', serif;color:#000;white-space:pre;letter-spacing:-0.550px;left:2px;">8</div></div><svg style="left:17px;top:513px;" width="6" height="6" viewBox="0 0 6 6"><path d="M0 0 H6 L0 6 Z" fill="#008000"/></svg><div class="c" style="left:161px;top:513px;width:124px;height:16px;"><div style="top:1.64px;font:13.33px/13.33px 'Liberation Serif', serif;color:#000;white-space:pre;letter-spacing:-0.145px;left:2px;">Quyền sử dụng đất</div></div><div class="c" style="left:286px;top:513px;width:166px;height:16px;"><div style="top:1.64px;font:13.33px/13.33px 'Liberation Serif', serif;color:#000;white-space:pre;letter-spacing:-0.550px;left:2px;">GTQSDĐ</div></div><div class="c" style="left:453px;top:513px;width:151px;height:16px;"><div style="top:1.64px;font:13.33px/13.33px 'Liberation Serif', serif;color:#000;white-space:pre;letter-spacing:-0.252px;left:2px;">Đất đường 53B</div></div><div class="c" style="left:605px;top:513px;width:70px;height:16px;"><div style="top:1.64px;font:13.33px/13.33px 'Liberation Serif', serif;color:#000;white-space:pre;letter-spacing:-0.550px;right:2px;">24950</div></div><div class="c" style="left:676px;top:513px;width:70px;height:16px;"><div style="top:1.64px;font:13.33px/13.33px 'Liberation Serif', serif;color:#000;white-space:pre;letter-spacing:-0.550px;left:2px;">M2</div></div><div class="c" style="left:747px;top:513px;width:154px;height:16px;"><div style="top:1.64px;font:13.33px/13.33px 'Liberation Serif', serif;color:#000;white-space:pre;letter-spacing:-0.550px;left:2px;">VP</div></div><div class="c" style="left:902px;top:513px;width:154px;height:16px;"><div style="top:1.64px;font:13.33px/13.33px 'Liberation Serif', serif;color:#000;white-space:pre;letter-spacing:-0.274px;left:2px;">Nguồn NSNN cấp</div></div><div class="c" style="left:1215px;top:513px;width:77px;height:16px;"><div style="top:1.64px;font:13.33px/13.33px 'Liberation Serif', serif;color:#000;white-space:pre;letter-spacing:-0.550px;right:2px;">0</div></div><div class="c" style="left:1546px;top:513px;width:100px;height:16px;"><div style="top:1.64px;font:13.33px/13.33px 'Liberation Serif', serif;color:#000;white-space:pre;letter-spacing:-0.550px;left:0px;width:101px;text-align:center;">11/30/2019</div></div><div class="c" style="left:1647px;top:513px;width:101px;height:16px;"><div style="top:1.64px;font:13.33px/13.33px 'Liberation Serif', serif;color:#000;white-space:pre;letter-spacing:-0.550px;left:0px;width:102px;text-align:center;">11/30/2019</div></div><div class="c" style="left:1749px;top:513px;width:93px;height:16px;"><div style="top:1.64px;font:13.33px/13.33px 'Liberation Serif', serif;color:#000;white-space:pre;letter-spacing:-0.550px;left:0px;width:94px;text-align:center;">11/30/2019</div></div><div class="c" style="left:1843px;top:513px;width:46px;height:16px;"><div style="top:1.64px;font:13.33px/13.33px 'Liberation Serif', serif;color:#000;white-space:pre;letter-spacing:-0.550px;left:0px;width:108px;text-align:center;">1/1/2020</div></div><div class="c" style="left:17px;top:190px;width:143px;height:67px;"><div style="top:26.54px;left:0px;width:144px;text-align:center;font:bold 13.33px/13.33px 'Liberation Serif', serif;color:#000;white-space:nowrap;letter-spacing:-0.35px;">Mã loại tài sản (*)</div></div><div class="c" style="left:161px;top:190px;width:124px;height:67px;"><div style="top:26.54px;left:0px;width:125px;text-align:center;font:bold 13.33px/13.33px 'Liberation Serif', serif;color:#000;white-space:nowrap;letter-spacing:-0.35px;">Tên loại tài sản</div></div><div class="c" style="left:286px;top:190px;width:166px;height:67px;"><div style="top:26.54px;left:0px;width:167px;text-align:center;font:bold 13.33px/13.33px 'Liberation Serif', serif;color:#000;white-space:nowrap;letter-spacing:-0.35px;">Mã tài sản (*)</div></div><div class="c" style="left:453px;top:190px;width:151px;height:67px;"><div style="top:26.54px;left:0px;width:152px;text-align:center;font:bold 13.33px/13.33px 'Liberation Serif', serif;color:#000;white-space:nowrap;letter-spacing:-0.35px;">Tên tài sản (*)</div></div><div class="c" style="left:605px;top:190px;width:70px;height:67px;"><div style="top:18.84px;left:0px;width:71px;text-align:center;font:bold 13.33px/13.33px 'Liberation Serif', serif;color:#000;white-space:nowrap;letter-spacing:-0.35px;">Số lượng</div><div style="top:36.34px;left:0px;width:71px;text-align:center;font:bold 13.33px/13.33px 'Liberation Serif', serif;color:#000;white-space:nowrap;letter-spacing:-0.35px;">(*)</div></div><div class="c" style="left:676px;top:190px;width:70px;height:67px;"><div style="top:26.54px;left:0px;width:71px;text-align:center;font:bold 13.33px/13.33px 'Liberation Serif', serif;color:#000;white-space:nowrap;letter-spacing:-0.35px;">Đơn vị tính</div></div><div class="c" style="left:747px;top:190px;width:154px;height:67px;"><div style="top:26.54px;left:0px;width:155px;text-align:center;font:bold 13.33px/13.33px 'Liberation Serif', serif;color:#000;white-space:nowrap;letter-spacing:-0.35px;">Mã phòng ban (*)</div></div><div class="c" style="left:902px;top:190px;width:154px;height:67px;"><div style="top:26.54px;left:0px;width:155px;text-align:center;font:bold 13.33px/13.33px 'Liberation Serif', serif;color:#000;white-space:nowrap;letter-spacing:-0.35px;">Nguồn hình thành (*)</div></div><div class="c" style="left:1057px;top:190px;width:72px;height:67px;"><div style="top:26.54px;left:0px;width:73px;text-align:center;font:bold 13.33px/13.33px 'Liberation Serif', serif;color:#000;white-space:nowrap;letter-spacing:-0.35px;">Số hiệu</div></div><div class="c" style="left:1130px;top:190px;width:84px;height:67px;"><div style="top:18.84px;left:0px;width:85px;text-align:center;font:bold 13.33px/13.33px 'Liberation Serif', serif;color:#000;white-space:nowrap;letter-spacing:-0.35px;">Thời gian bảo</div><div style="top:36.34px;left:0px;width:85px;text-align:center;font:bold 13.33px/13.33px 'Liberation Serif', serif;color:#000;white-space:nowrap;letter-spacing:-0.35px;">hành</div></div><div class="c" style="left:1215px;top:190px;width:77px;height:67px;"><div style="top:26.54px;left:0px;width:78px;text-align:center;font:bold 13.33px/13.33px 'Liberation Serif', serif;color:#000;white-space:nowrap;letter-spacing:-0.35px;">Năm sản xuất</div></div><div class="c" style="left:1293px;top:190px;width:138px;height:67px;"><div style="top:26.54px;left:0px;width:139px;text-align:center;font:bold 13.33px/13.33px 'Liberation Serif', serif;color:#000;white-space:nowrap;letter-spacing:-0.35px;">Nước sản xuất</div></div><div class="c" style="left:1432px;top:190px;width:113px;height:67px;"><div style="top:26.54px;left:0px;width:114px;text-align:center;font:bold 13.33px/13.33px 'Liberation Serif', serif;color:#000;white-space:nowrap;letter-spacing:-0.35px;">Nhà cung cấp</div></div><div class="c" style="left:1546px;top:190px;width:100px;height:67px;"><div style="top:26.54px;left:0px;width:101px;text-align:center;font:bold 13.33px/13.33px 'Liberation Serif', serif;color:#000;white-space:nowrap;letter-spacing:-0.35px;">Ngày mua (*)</div></div><div class="c" style="left:1647px;top:190px;width:101px;height:67px;"><div style="top:26.54px;left:0px;width:102px;text-align:center;font:bold 13.33px/13.33px 'Liberation Serif', serif;color:#000;white-space:nowrap;letter-spacing:-0.35px;">Ngày sử dụng (*)</div></div><div class="c" style="left:1749px;top:190px;width:93px;height:67px;"><div style="top:18.84px;left:0px;width:94px;text-align:center;font:bold 13.33px/13.33px 'Liberation Serif', serif;color:#000;white-space:nowrap;letter-spacing:-0.35px;">Ngày ghi tăng</div><div style="top:36.34px;left:0px;width:94px;text-align:center;font:bold 13.33px/13.33px 'Liberation Serif', serif;color:#000;white-space:nowrap;letter-spacing:-0.35px;">(*)</div></div><div class="c" style="left:1843px;top:190px;width:46px;height:67px;"><div style="top:26.54px;left:4.5px;font:bold 13.33px/13.33px 'Liberation Serif', serif;color:#000;white-space:nowrap;letter-spacing:-0.35px;">Ngày Bắt đầu (*)</div></div><svg style="left:17px;top:190px;" width="6" height="6" viewBox="0 0 6 6"><path d="M0 0 H0 L0 0 Z" fill="#008000"/></svg><div style="left:596px;top:302px;width:85px;height:28px;border:5px solid #e01a1a;"></div><div style="left:598px;top:354px;width:83px;height:28px;border:5px solid #e01a1a;"></div><div style="left:1890px;top:173px;width:20px;height:788px;background:#e6e6e6;"></div><div style="left:1893px;top:207px;width:15px;height:739px;background:#dadada;"></div><div style="left:1893px;top:175px;width:15px;height:15px;background:#fff;border:1px solid #ababab;"></div><svg style="left:1896px;top:179px;" width="9" height="6" viewBox="0 0 9 6"><path d="M0.5 5 L4.5 1 L8.5 5 Z" fill="#777"/></svg><div style="left:1893px;top:190px;width:15px;height:17px;background:#fff;border:1px solid #ababab;"></div><div style="left:1893px;top:946px;width:15px;height:15px;background:#fff;border:1px solid #c0c0c0;"></div><svg style="left:1896px;top:950px;" width="9" height="6" viewBox="0 0 9 6"><path d="M0.5 1 L4.5 5 L8.5 1 Z" fill="#777"/></svg><div style="left:2px;top:960px;width:1888px;height:1px;background:#9b9b9b;"></div><div style="left:2px;top:961px;width:1908px;height:27px;background:#e6e6e6;"></div><div style="left:2px;top:988px;width:1908px;height:1px;background:#d5d5d5;"></div><div style="left:2px;top:989px;width:1908px;height:15px;background:#f3f3f3;"></div><svg style="left:17px;top:970px;" width="8" height="8" viewBox="0 0 8 8"><path d="M6 1 L2 4 L6 7 Z" fill="#b4b4b4"/></svg><svg style="left:45px;top:970px;" width="8" height="8" viewBox="0 0 8 8"><path d="M2 1 L6 4 L2 7 Z" fill="#b4b4b4"/></svg><div style="left:91px;top:960px;width:118px;height:26px;background:#fff;border-left:1px solid #9b9b9b;border-right:1px solid #9b9b9b;"></div><div style="left:91px;top:983px;width:118px;height:2px;background:#217346;"></div><div style="top:967.16px;font:bold 12.8px/12.8px 'Liberation Sans', sans-serif;color:#217346;white-space:nowrap;left:-350px;width:1000px;text-align:center;">Tài sản cố định</div><svg style="left:242px;top:966px;" width="16" height="16" viewBox="0 0 16 16"><circle cx="8" cy="8" r="7.3" fill="none" stroke="#7a7a7a" stroke-width="1"/><path d="M8 4.2 V11.8 M4.2 8 H11.8" stroke="#666" stroke-width="1.6"/></svg><div style="left:554px;top:969px;width:2px;height:2px;background:#9b9b9b;"></div><div style="left:554px;top:973px;width:2px;height:2px;background:#9b9b9b;"></div><div style="left:554px;top:977px;width:2px;height:2px;background:#9b9b9b;"></div><div style="left:586px;top:967px;width:1291px;height:15px;background:#dadada;"></div><div style="left:571px;top:967px;width:16px;height:15px;background:#fff;border:1px solid #ababab;"></div><svg style="left:574px;top:970px;" width="9" height="9" viewBox="0 0 9 9"><path d="M6 0.5 L2 4.5 L6 8.5 Z" fill="#555"/></svg><div style="left:586px;top:967px;width:580px;height:15px;background:#fff;border:1px solid #ababab;"></div><div style="left:1877px;top:967px;width:15px;height:15px;background:#fff;border:1px solid #ababab;"></div><svg style="left:1880px;top:970px;" width="9" height="9" viewBox="0 0 9 9"><path d="M3 0.5 L7 4.5 L3 8.5 Z" fill="#777"/></svg><div style="left:1625px;top:989px;width:38px;height:15px;background:#c6c6c6;"></div><svg style="left:1636px;top:991px;" width="16" height="13" viewBox="0 0 16 13"><g fill="none" stroke="#777" stroke-width="1"><path d="M1.5 1.5 H13.5 V13 M1.5 1.5 V13 M5.5 1.5 V13 M9.5 1.5 V13 M1.5 5.5 H13.5 M1.5 9.5 H13.5"/></g></svg><svg style="left:1674px;top:991px;" width="17" height="13" viewBox="0 0 17 13"><g fill="none" stroke="#777" stroke-width="1"><path d="M1.5 13 V1.5 H14.5 V13"/><rect x="3.5" y="3.5" width="9" height="9"/><path d="M5 6.5H11M5 8.5H11M5 10.5H11"/></g></svg><svg style="left:1712px;top:991px;" width="16" height="13" viewBox="0 0 16 13"><g fill="none" stroke="#777" stroke-width="1"><path d="M1.5 13 V1.5 H14.5 V13 M1.5 7.5 H5.5 V1.5 M5.5 5.5 H9.5 V1.5"/></g></svg><div style="left:1744px;top:998px;width:7px;height:2px;background:#5a5a5a;"></div><div style="left:1754px;top:998px;width:101px;height:1px;background:#a0a0a0;"></div><div style="left:1802px;top:993px;width:5px;height:11px;background:#6a6a6a;"></div><div style="left:1857px;top:998px;width:9px;height:2px;background:#5a5a5a;"></div><div style="left:1860.5px;top:994.5px;width:2px;height:9px;background:#5a5a5a;"></div><div style="top:992.69px;font:normal 11px/11px 'Liberation Sans', sans-serif;color:#444;white-space:nowrap;letter-spacing:-0.300px;left:903px;width:1000px;text-align:right;">100%</div></body></html>
